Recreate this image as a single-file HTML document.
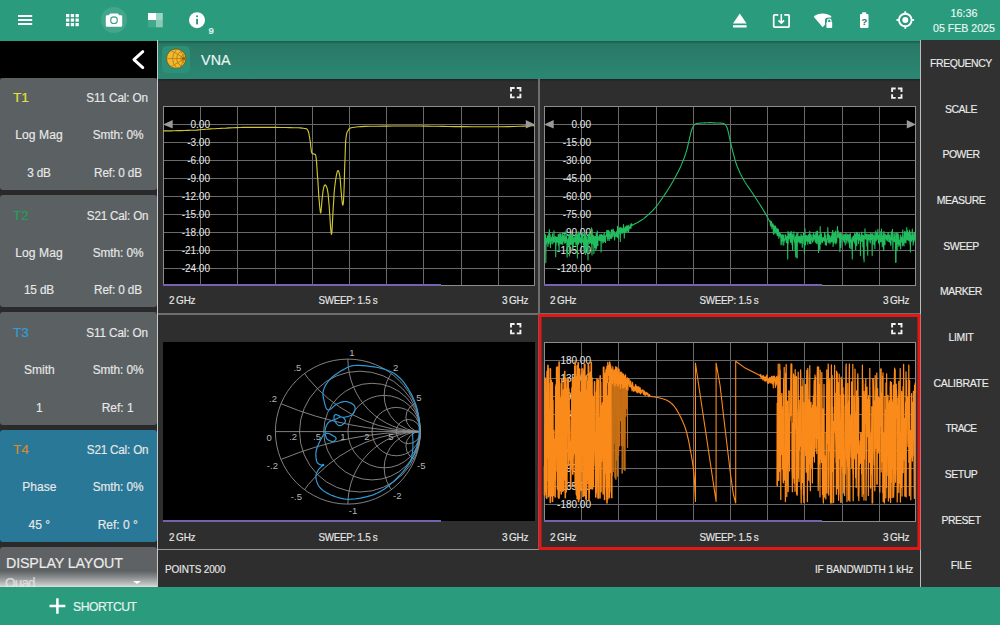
<!DOCTYPE html><html><head><meta charset="utf-8"><style>
html,body{margin:0;padding:0;width:1000px;height:625px;overflow:hidden;background:#2e2e2e;font-family:"Liberation Sans", sans-serif;}
.a{position:absolute;}
.t{position:absolute;white-space:nowrap;font-family:"Liberation Sans", sans-serif;-webkit-text-stroke:0.15px currentColor;}
svg{position:absolute;left:0;top:0;}
</style></head><body>
<div class="a" style="left:0;top:0;width:1000px;height:41px;background:#2b9b7e"></div>
<svg width="1000" height="625"><rect x="18" y="15" width="14.2" height="2" fill="#fff"/><rect x="18" y="19" width="14.2" height="2" fill="#fff"/><rect x="18" y="23" width="14.2" height="2" fill="#fff"/><rect x="66.00" y="14.00" width="3.3" height="3.2" fill="#fff"/><rect x="66.00" y="18.50" width="3.3" height="3.2" fill="#fff"/><rect x="66.00" y="23.00" width="3.3" height="3.2" fill="#fff"/><rect x="70.75" y="14.00" width="3.3" height="3.2" fill="#fff"/><rect x="70.75" y="18.50" width="3.3" height="3.2" fill="#fff"/><rect x="70.75" y="23.00" width="3.3" height="3.2" fill="#fff"/><rect x="75.50" y="14.00" width="3.3" height="3.2" fill="#fff"/><rect x="75.50" y="18.50" width="3.3" height="3.2" fill="#fff"/><rect x="75.50" y="23.00" width="3.3" height="3.2" fill="#fff"/><circle cx="114" cy="20" r="13" fill="#43a68b"/><path d="M108.7 15.2 L110.2 13.4 H117.8 L119.3 15.2 H121 Q122.2 15.2 122.2 16.4 V25.6 Q122.2 26.8 121 26.8 H107 Q105.8 26.8 105.8 25.6 V16.4 Q105.8 15.2 107 15.2 Z" fill="#fff"/><circle cx="114" cy="20.2" r="3.3" fill="none" stroke="#3d9f86" stroke-width="1.2"/><rect x="148" y="13" width="8" height="7" fill="#ffffff"/><rect x="156" y="13" width="6.8" height="7" fill="#9ed4c4"/><rect x="156" y="20" width="6.8" height="7.3" fill="#88cab6"/><rect x="148" y="20" width="8" height="7.3" fill="#42a88d"/><circle cx="197" cy="20.2" r="8" fill="#fff"/><rect x="196.1" y="18.8" width="1.9" height="5.6" fill="#2b9b7e"/><circle cx="197.05" cy="16.2" r="1.05" fill="#2b9b7e"/><path d="M739.8 13.4 L746.6 23.4 H733 Z" fill="#fff"/><rect x="733" y="25.2" width="13.6" height="2.3" fill="#fff"/><path d="M778.3 14.8 H774.6 Q773.7 14.8 773.7 15.7 V26.2 Q773.7 27.1 774.6 27.1 H788.2 Q789.1 27.1 789.1 26.2 V15.7 Q789.1 14.8 788.2 14.8 H784.3" fill="none" stroke="#fff" stroke-width="1.7"/><path d="M781.3 13.9 V23.2 M778.5 20.4 L781.3 23.2 L784.1 20.4" fill="none" stroke="#fff" stroke-width="1.6"/><path d="M813.7 16.8 A13.75 13.75 0 0 1 831.6 16.8 L822.7 27.2 Z" fill="#fff"/><path d="M825 19.8 Q825 17.6 829.2 17.6 Q833.4 17.6 833.4 19.8 V29 H825 Z" fill="#2b9b7e"/><rect x="826.4" y="22" width="5.8" height="5.9" rx="0.7" fill="#fff"/><path d="M827.6 22.3 V20.7 A1.7 1.7 0 0 1 831 20.7 V22.3" fill="none" stroke="#fff" stroke-width="1.2"/><rect x="862.2" y="12.3" width="4" height="2" fill="#fff"/><rect x="860" y="14" width="8.5" height="14" rx="1" fill="#fff"/><text x="864.3" y="25.4" font-family="Liberation Sans" font-weight="bold" font-size="9.5" text-anchor="middle" fill="#1f6e5a">?</text><circle cx="905.3" cy="20" r="6.3" fill="none" stroke="#fff" stroke-width="1.9"/><circle cx="905.3" cy="20" r="3" fill="#fff"/><path d="M905.3 11.2 V13.7 M905.3 26.3 V28.8 M896.5 20 H899 M911.6 20 H914.1" stroke="#fff" stroke-width="1.9"/></svg>
<div class="t" style="left:61.20px;width:300px;text-align:center;top:25px;font-size:9.6px;line-height:11.52px;color:#d6f2ea;font-weight:bold;">9</div>
<div class="t" style="left:814.19px;width:300px;text-align:center;top:7px;font-size:10.8px;line-height:12.96px;color:#e8f8f2;font-weight:normal;letter-spacing:-0.016px;transform:scaleX(0.9976);transform-origin:center;">16:36</div>
<div class="t" style="left:814.00px;width:300px;text-align:center;top:22px;font-size:10.6px;line-height:12.72px;color:#e8f8f2;font-weight:normal;letter-spacing:-0.002px;">05 FEB 2025</div>
<div class="a" style="left:0;top:41px;width:158px;height:37px;background:#000"></div>
<div class="a" style="left:157px;top:40px;width:1px;height:547px;background:#c8c8c8"></div>
<div class="a" style="left:0;top:78px;width:157px;height:509px;background:#2a2a2a"></div>
<div class="a" style="left:158px;top:41px;width:762px;height:38px;background:linear-gradient(#2a7764,#2a8773)"></div>
<div class="a" style="left:158px;top:41px;width:762px;height:3px;background:linear-gradient(#1c5a4b,#2a7764)"></div>
<div class="a" style="left:158px;top:79px;width:762px;height:3px;background:linear-gradient(#222,#2e2e2e)"></div>
<div class="a" style="left:920px;top:40px;width:1px;height:547px;background:#bdbdbd"></div>
<div class="a" style="left:921px;top:40px;width:79px;height:547px;background:#313131"></div>
<div class="a" style="left:0;top:587px;width:1000px;height:38px;background:#2b9b7e"></div>
<div class="a" style="left:0;top:78px;width:157px;height:112px;background:#5b6163;border-radius:3px"></div>
<div class="t" style="left:13px;top:90px;font-size:13.7px;line-height:16.44px;color:#e3e33a;font-weight:normal;letter-spacing:0.008px;">T1</div>
<div class="t" style="right:851.74px;top:91px;font-size:12px;line-height:14.40px;color:#e8e8e8;font-weight:normal;letter-spacing:-0.141px;transform:scaleX(0.9782);transform-origin:right;">S11 Cal: On</div>
<div class="t" style="left:-110.67px;width:300px;text-align:center;top:128px;font-size:12px;line-height:14.40px;color:#e8e8e8;font-weight:normal;letter-spacing:0.058px;transform:scaleX(1.0074);transform-origin:center;">Log Mag</div>
<div class="t" style="left:-32.34px;width:300px;text-align:center;top:128px;font-size:12px;line-height:14.40px;color:#e8e8e8;font-weight:normal;letter-spacing:-0.088px;transform:scaleX(0.9881);transform-origin:center;">Smth: 0%</div>
<div class="t" style="left:-110.78px;width:300px;text-align:center;top:166px;font-size:12px;line-height:14.40px;color:#e8e8e8;font-weight:normal;letter-spacing:-0.166px;transform:scaleX(0.9798);transform-origin:center;">3 dB</div>
<div class="t" style="left:-32.36px;width:300px;text-align:center;top:166px;font-size:12px;line-height:14.40px;color:#e8e8e8;font-weight:normal;letter-spacing:-0.128px;transform:scaleX(0.9795);transform-origin:center;">Ref: 0 dB</div>
<div class="a" style="left:0;top:195px;width:157px;height:112px;background:#5b6163;border-radius:3px"></div>
<div class="t" style="left:13px;top:208px;font-size:13.7px;line-height:16.44px;color:#1fa055;font-weight:normal;letter-spacing:0.008px;">T2</div>
<div class="t" style="right:851.78px;top:209px;font-size:12px;line-height:14.40px;color:#e8e8e8;font-weight:normal;letter-spacing:-0.186px;transform:scaleX(0.9715);transform-origin:right;">S21 Cal: On</div>
<div class="t" style="left:-110.67px;width:300px;text-align:center;top:246px;font-size:12px;line-height:14.40px;color:#e8e8e8;font-weight:normal;letter-spacing:0.058px;transform:scaleX(1.0074);transform-origin:center;">Log Mag</div>
<div class="t" style="left:-32.34px;width:300px;text-align:center;top:246px;font-size:12px;line-height:14.40px;color:#e8e8e8;font-weight:normal;letter-spacing:-0.088px;transform:scaleX(0.9881);transform-origin:center;">Smth: 0%</div>
<div class="t" style="left:-110.77px;width:300px;text-align:center;top:283px;font-size:12px;line-height:14.40px;color:#e8e8e8;font-weight:normal;letter-spacing:-0.146px;transform:scaleX(0.9813);transform-origin:center;">15 dB</div>
<div class="t" style="left:-32.36px;width:300px;text-align:center;top:283px;font-size:12px;line-height:14.40px;color:#e8e8e8;font-weight:normal;letter-spacing:-0.128px;transform:scaleX(0.9795);transform-origin:center;">Ref: 0 dB</div>
<div class="a" style="left:0;top:312px;width:157px;height:113px;background:#5b6163;border-radius:3px"></div>
<div class="t" style="left:13px;top:325px;font-size:13.7px;line-height:16.44px;color:#2f9fdc;font-weight:normal;letter-spacing:0.008px;">T3</div>
<div class="t" style="right:851.74px;top:326px;font-size:12px;line-height:14.40px;color:#e8e8e8;font-weight:normal;letter-spacing:-0.141px;transform:scaleX(0.9782);transform-origin:right;">S11 Cal: On</div>
<div class="t" style="left:-110.70px;width:300px;text-align:center;top:363px;font-size:12px;line-height:14.40px;color:#e8e8e8;font-weight:normal;">Smith</div>
<div class="t" style="left:-32.34px;width:300px;text-align:center;top:363px;font-size:12px;line-height:14.40px;color:#e8e8e8;font-weight:normal;letter-spacing:-0.088px;transform:scaleX(0.9881);transform-origin:center;">Smth: 0%</div>
<div class="t" style="left:-110.70px;width:300px;text-align:center;top:401px;font-size:12px;line-height:14.40px;color:#e8e8e8;font-weight:normal;">1</div>
<div class="t" style="left:-32.30px;width:300px;text-align:center;top:401px;font-size:12px;line-height:14.40px;color:#e8e8e8;font-weight:normal;">Ref: 1</div>
<div class="a" style="left:0;top:430px;width:157px;height:112px;background:#2a7898;border-radius:3px"></div>
<div class="t" style="left:13px;top:442px;font-size:13.7px;line-height:16.44px;color:#dc8a2c;font-weight:normal;letter-spacing:0.008px;">T4</div>
<div class="t" style="right:851.78px;top:443px;font-size:12px;line-height:14.40px;color:#e8e8e8;font-weight:normal;letter-spacing:-0.186px;transform:scaleX(0.9715);transform-origin:right;">S21 Cal: On</div>
<div class="t" style="left:-110.70px;width:300px;text-align:center;top:480px;font-size:12px;line-height:14.40px;color:#e8e8e8;font-weight:normal;">Phase</div>
<div class="t" style="left:-32.34px;width:300px;text-align:center;top:480px;font-size:12px;line-height:14.40px;color:#e8e8e8;font-weight:normal;letter-spacing:-0.088px;transform:scaleX(0.9881);transform-origin:center;">Smth: 0%</div>
<div class="t" style="left:-110.70px;width:300px;text-align:center;top:518px;font-size:12px;line-height:14.40px;color:#e8e8e8;font-weight:normal;">45 °</div>
<div class="t" style="left:-32.30px;width:300px;text-align:center;top:518px;font-size:12px;line-height:14.40px;color:#e8e8e8;font-weight:normal;">Ref: 0 °</div>
<div class="a" style="left:0;top:547px;width:157px;height:40px;background:#5e6264;border-radius:3px 3px 0 0"></div>
<div class="t" style="left:5.6px;top:555px;font-size:14.5px;line-height:17.40px;color:#ececec;font-weight:normal;letter-spacing:-0.151px;transform:scaleX(0.9838);transform-origin:left;">DISPLAY LAYOUT</div>
<div class="t" style="left:5.4px;top:575px;font-size:14.5px;line-height:17.40px;color:#e0e0e0;font-weight:normal;letter-spacing:-0.844px;transform:scaleX(0.9286);transform-origin:left;">Quad</div>
<div class="a" style="left:0;top:547px;width:157px;height:40px;background:linear-gradient(rgba(220,220,220,0) 0px,rgba(220,220,220,0) 24px,rgba(200,200,200,0.45) 31px,rgba(225,225,225,0.8) 38px,rgba(230,240,236,0.9) 40px)"></div>
<div class="a" style="left:0;top:587px;width:157px;height:6px;background:#2b9b7e"></div>
<div class="a" style="left:133px;top:581px;width:0;height:0;border-left:4px solid transparent;border-right:4px solid transparent;border-top:3px solid #fff"></div>
<svg width="1000" height="625" style="pointer-events:none"><polyline points="142.8,51.6 133.9,59.6 142.8,67.6" fill="none" stroke="#fff" stroke-width="2.9" stroke-linecap="round" stroke-linejoin="round"/></svg>
<div class="a" style="left:162px;top:46px;width:28px;height:27px;background:#2c8f77;border-radius:5px"></div>
<svg width="1000" height="625"><defs><clipPath id="vc"><circle cx="176.2" cy="58.6" r="9.4"/></clipPath></defs><circle cx="176.2" cy="58.6" r="9.7" fill="#f2b82e" stroke="#6a5010" stroke-width="0.7"/><g clip-path="url(#vc)" fill="none" stroke="#b07a14" stroke-width="0.8"><circle cx="185" cy="58.6" r="4.2"/><circle cx="185" cy="58.6" r="8.3"/><circle cx="185" cy="58.6" r="12.4"/><line x1="165" y1="58.6" x2="185" y2="58.6"/><line x1="185" y1="58.6" x2="168" y2="48.8"/><line x1="185" y1="58.6" x2="168" y2="68.4"/><line x1="185" y1="58.6" x2="176" y2="43"/><line x1="185" y1="58.6" x2="176" y2="74.2"/></g><circle cx="183.6" cy="58.6" r="1.9" fill="#9a6410"/></svg>
<div class="t" style="left:200.7px;top:52px;font-size:14.2px;line-height:17.04px;color:#e8f8f4;font-weight:normal;letter-spacing:0.107px;transform:scaleX(1.0073);transform-origin:left;">VNA</div>
<div class="a" style="left:538px;top:78px;width:2px;height:237px;background:#6e6e6e"></div>
<div class="a" style="left:158px;top:313px;width:381px;height:2px;background:#6e6e6e"></div>
<div class="a" style="left:538px;top:313px;width:382px;height:2px;background:#6e6e6e"></div>
<div class="a" style="left:538px;top:315px;width:2px;height:235px;background:#6e6e6e"></div>
<div class="a" style="left:158px;top:549px;width:762px;height:1px;background:#9a9a9a"></div>
<svg width="1000" height="625"><rect x="163" y="106" width="372" height="180" fill="#000"/>
<line x1="200.5" y1="106" x2="200.5" y2="286" stroke="#6a6a6a" stroke-width="1"/>
<line x1="237.5" y1="106" x2="237.5" y2="286" stroke="#6a6a6a" stroke-width="1"/>
<line x1="275.5" y1="106" x2="275.5" y2="286" stroke="#6a6a6a" stroke-width="1"/>
<line x1="312.5" y1="106" x2="312.5" y2="286" stroke="#6a6a6a" stroke-width="1"/>
<line x1="349.5" y1="106" x2="349.5" y2="286" stroke="#6a6a6a" stroke-width="1"/>
<line x1="386.5" y1="106" x2="386.5" y2="286" stroke="#6a6a6a" stroke-width="1"/>
<line x1="423.5" y1="106" x2="423.5" y2="286" stroke="#6a6a6a" stroke-width="1"/>
<line x1="461.5" y1="106" x2="461.5" y2="286" stroke="#6a6a6a" stroke-width="1"/>
<line x1="498.5" y1="106" x2="498.5" y2="286" stroke="#6a6a6a" stroke-width="1"/>
<line x1="163" y1="124.5" x2="535" y2="124.5" stroke="#6a6a6a" stroke-width="1"/>
<line x1="163" y1="142.5" x2="535" y2="142.5" stroke="#6a6a6a" stroke-width="1"/>
<line x1="163" y1="160.5" x2="535" y2="160.5" stroke="#6a6a6a" stroke-width="1"/>
<line x1="163" y1="178.5" x2="535" y2="178.5" stroke="#6a6a6a" stroke-width="1"/>
<line x1="163" y1="196.5" x2="535" y2="196.5" stroke="#6a6a6a" stroke-width="1"/>
<line x1="163" y1="214.5" x2="535" y2="214.5" stroke="#6a6a6a" stroke-width="1"/>
<line x1="163" y1="232.5" x2="535" y2="232.5" stroke="#6a6a6a" stroke-width="1"/>
<line x1="163" y1="250.5" x2="535" y2="250.5" stroke="#6a6a6a" stroke-width="1"/>
<line x1="163" y1="268.5" x2="535" y2="268.5" stroke="#6a6a6a" stroke-width="1"/>
<rect x="163.5" y="106.5" width="371" height="179" fill="none" stroke="#8c8c8c" stroke-width="1"/>
<rect x="544" y="106" width="372" height="180" fill="#000"/>
<line x1="581.5" y1="106" x2="581.5" y2="286" stroke="#6a6a6a" stroke-width="1"/>
<line x1="618.5" y1="106" x2="618.5" y2="286" stroke="#6a6a6a" stroke-width="1"/>
<line x1="656.5" y1="106" x2="656.5" y2="286" stroke="#6a6a6a" stroke-width="1"/>
<line x1="693.5" y1="106" x2="693.5" y2="286" stroke="#6a6a6a" stroke-width="1"/>
<line x1="730.5" y1="106" x2="730.5" y2="286" stroke="#6a6a6a" stroke-width="1"/>
<line x1="767.5" y1="106" x2="767.5" y2="286" stroke="#6a6a6a" stroke-width="1"/>
<line x1="804.5" y1="106" x2="804.5" y2="286" stroke="#6a6a6a" stroke-width="1"/>
<line x1="842.5" y1="106" x2="842.5" y2="286" stroke="#6a6a6a" stroke-width="1"/>
<line x1="879.5" y1="106" x2="879.5" y2="286" stroke="#6a6a6a" stroke-width="1"/>
<line x1="544" y1="124.5" x2="916" y2="124.5" stroke="#6a6a6a" stroke-width="1"/>
<line x1="544" y1="142.5" x2="916" y2="142.5" stroke="#6a6a6a" stroke-width="1"/>
<line x1="544" y1="160.5" x2="916" y2="160.5" stroke="#6a6a6a" stroke-width="1"/>
<line x1="544" y1="178.5" x2="916" y2="178.5" stroke="#6a6a6a" stroke-width="1"/>
<line x1="544" y1="196.5" x2="916" y2="196.5" stroke="#6a6a6a" stroke-width="1"/>
<line x1="544" y1="214.5" x2="916" y2="214.5" stroke="#6a6a6a" stroke-width="1"/>
<line x1="544" y1="232.5" x2="916" y2="232.5" stroke="#6a6a6a" stroke-width="1"/>
<line x1="544" y1="250.5" x2="916" y2="250.5" stroke="#6a6a6a" stroke-width="1"/>
<line x1="544" y1="268.5" x2="916" y2="268.5" stroke="#6a6a6a" stroke-width="1"/>
<rect x="544.5" y="106.5" width="371" height="179" fill="none" stroke="#8c8c8c" stroke-width="1"/>
<rect x="163" y="342" width="372" height="179" fill="#000"/>
<rect x="544" y="342" width="372" height="180" fill="#000"/>
<line x1="581.5" y1="342" x2="581.5" y2="522" stroke="#6a6a6a" stroke-width="1"/>
<line x1="618.5" y1="342" x2="618.5" y2="522" stroke="#6a6a6a" stroke-width="1"/>
<line x1="656.5" y1="342" x2="656.5" y2="522" stroke="#6a6a6a" stroke-width="1"/>
<line x1="693.5" y1="342" x2="693.5" y2="522" stroke="#6a6a6a" stroke-width="1"/>
<line x1="730.5" y1="342" x2="730.5" y2="522" stroke="#6a6a6a" stroke-width="1"/>
<line x1="767.5" y1="342" x2="767.5" y2="522" stroke="#6a6a6a" stroke-width="1"/>
<line x1="804.5" y1="342" x2="804.5" y2="522" stroke="#6a6a6a" stroke-width="1"/>
<line x1="842.5" y1="342" x2="842.5" y2="522" stroke="#6a6a6a" stroke-width="1"/>
<line x1="879.5" y1="342" x2="879.5" y2="522" stroke="#6a6a6a" stroke-width="1"/>
<line x1="544" y1="360.5" x2="916" y2="360.5" stroke="#6a6a6a" stroke-width="1"/>
<line x1="544" y1="378.5" x2="916" y2="378.5" stroke="#6a6a6a" stroke-width="1"/>
<line x1="544" y1="396.5" x2="916" y2="396.5" stroke="#6a6a6a" stroke-width="1"/>
<line x1="544" y1="414.5" x2="916" y2="414.5" stroke="#6a6a6a" stroke-width="1"/>
<line x1="544" y1="432.5" x2="916" y2="432.5" stroke="#6a6a6a" stroke-width="1"/>
<line x1="544" y1="450.5" x2="916" y2="450.5" stroke="#6a6a6a" stroke-width="1"/>
<line x1="544" y1="468.5" x2="916" y2="468.5" stroke="#6a6a6a" stroke-width="1"/>
<line x1="544" y1="486.5" x2="916" y2="486.5" stroke="#6a6a6a" stroke-width="1"/>
<line x1="544" y1="504.5" x2="916" y2="504.5" stroke="#6a6a6a" stroke-width="1"/>
<rect x="544.5" y="342.5" width="371" height="179" fill="none" stroke="#8c8c8c" stroke-width="1"/>
<text x="210" y="128.1" text-anchor="end" font-family="Liberation Sans" font-size="10" fill="#e8e8e8">0.00</text>
<text x="210" y="146.1" text-anchor="end" font-family="Liberation Sans" font-size="10" fill="#e8e8e8">-3.00</text>
<text x="210" y="164.1" text-anchor="end" font-family="Liberation Sans" font-size="10" fill="#e8e8e8">-6.00</text>
<text x="210" y="182.1" text-anchor="end" font-family="Liberation Sans" font-size="10" fill="#e8e8e8">-9.00</text>
<text x="210" y="200.1" text-anchor="end" font-family="Liberation Sans" font-size="10" fill="#e8e8e8">-12.00</text>
<text x="210" y="218.1" text-anchor="end" font-family="Liberation Sans" font-size="10" fill="#e8e8e8">-15.00</text>
<text x="210" y="236.1" text-anchor="end" font-family="Liberation Sans" font-size="10" fill="#e8e8e8">-18.00</text>
<text x="210" y="254.1" text-anchor="end" font-family="Liberation Sans" font-size="10" fill="#e8e8e8">-21.00</text>
<text x="210" y="272.1" text-anchor="end" font-family="Liberation Sans" font-size="10" fill="#e8e8e8">-24.00</text>
<text x="591" y="128.1" text-anchor="end" font-family="Liberation Sans" font-size="10" fill="#e8e8e8">0.00</text>
<text x="591" y="146.1" text-anchor="end" font-family="Liberation Sans" font-size="10" fill="#e8e8e8">-15.00</text>
<text x="591" y="164.1" text-anchor="end" font-family="Liberation Sans" font-size="10" fill="#e8e8e8">-30.00</text>
<text x="591" y="182.1" text-anchor="end" font-family="Liberation Sans" font-size="10" fill="#e8e8e8">-45.00</text>
<text x="591" y="200.1" text-anchor="end" font-family="Liberation Sans" font-size="10" fill="#e8e8e8">-60.00</text>
<text x="591" y="218.1" text-anchor="end" font-family="Liberation Sans" font-size="10" fill="#e8e8e8">-75.00</text>
<text x="591" y="236.1" text-anchor="end" font-family="Liberation Sans" font-size="10" fill="#e8e8e8">-90.00</text>
<text x="591" y="254.1" text-anchor="end" font-family="Liberation Sans" font-size="10" fill="#e8e8e8">-105.00</text>
<text x="591" y="272.1" text-anchor="end" font-family="Liberation Sans" font-size="10" fill="#e8e8e8">-120.00</text>
<text x="591" y="364.1" text-anchor="end" font-family="Liberation Sans" font-size="10" fill="#e8e8e8">180.00</text>
<text x="591" y="382.1" text-anchor="end" font-family="Liberation Sans" font-size="10" fill="#e8e8e8">135.00</text>
<text x="591" y="400.1" text-anchor="end" font-family="Liberation Sans" font-size="10" fill="#e8e8e8">90.00</text>
<text x="591" y="418.1" text-anchor="end" font-family="Liberation Sans" font-size="10" fill="#e8e8e8">45.00</text>
<text x="591" y="436.1" text-anchor="end" font-family="Liberation Sans" font-size="10" fill="#e8e8e8">0.00</text>
<text x="591" y="454.1" text-anchor="end" font-family="Liberation Sans" font-size="10" fill="#e8e8e8">-45.00</text>
<text x="591" y="472.1" text-anchor="end" font-family="Liberation Sans" font-size="10" fill="#e8e8e8">-90.00</text>
<text x="591" y="490.1" text-anchor="end" font-family="Liberation Sans" font-size="10" fill="#e8e8e8">-135.00</text>
<text x="591" y="508.1" text-anchor="end" font-family="Liberation Sans" font-size="10" fill="#e8e8e8">-180.00</text>
<polyline points="163.0,130.9 164.2,130.9 165.9,130.9 167.8,130.8 170.0,130.8 172.5,130.8 175.0,130.7 177.8,130.6 181.1,130.6 184.5,130.5 187.9,130.4 191.2,130.3 194.0,130.2 196.4,130.1 198.4,129.9 200.3,129.7 202.1,129.5 204.0,129.4 206.0,129.2 208.1,129.1 210.3,128.9 212.5,128.8 214.8,128.7 217.3,128.5 220.0,128.4 223.0,128.2 226.2,128.1 229.6,127.9 233.1,127.8 236.6,127.6 240.0,127.5 243.2,127.4 246.3,127.4 249.4,127.3 252.6,127.3 256.1,127.3 260.0,127.3 264.6,127.3 269.9,127.3 275.4,127.4 280.9,127.5 285.8,127.5 290.0,127.6 293.3,127.7 296.0,127.7 298.3,127.8 300.2,127.9 301.9,128.1 303.4,128.3 304.7,128.5 305.6,128.6 306.3,128.8 306.9,129.1 307.4,129.6 307.9,130.5 308.4,131.8 308.9,133.5 309.2,135.4 309.6,137.4 309.9,139.5 310.2,141.4 310.5,143.4 310.7,145.5 310.9,147.6 311.2,149.6 311.4,151.3 311.7,152.6 312.1,153.4 312.5,153.8 312.9,153.9 313.4,153.9 313.8,153.9 314.2,154.1 314.5,154.3 314.9,154.3 315.2,154.4 315.4,154.7 315.7,155.5 316.0,157.0 316.3,159.3 316.6,162.4 316.8,165.9 317.1,169.7 317.3,173.5 317.6,177.2 317.9,180.9 318.1,184.8 318.4,188.8 318.6,192.7 318.8,196.4 319.1,199.6 319.4,202.7 319.6,205.7 319.9,208.5 320.2,210.8 320.4,212.4 320.7,213.0 320.9,212.3 321.1,210.6 321.3,208.1 321.6,205.2 321.8,202.4 322.0,200.0 322.2,197.8 322.5,195.6 322.8,193.4 323.0,191.3 323.3,189.5 323.6,188.0 323.9,186.9 324.2,186.0 324.5,185.4 324.8,185.0 325.1,184.9 325.4,185.0 325.8,185.3 326.1,185.9 326.5,186.7 326.9,187.7 327.3,189.1 327.6,190.7 327.9,192.6 328.2,194.7 328.4,197.2 328.6,199.9 328.9,203.0 329.2,206.4 329.5,211.0 329.9,216.9 330.3,223.1 330.7,228.8 331.1,232.8 331.5,234.4 331.8,232.9 332.1,228.9 332.4,223.4 332.7,217.2 333.0,211.3 333.3,206.4 333.6,202.5 333.8,198.9 334.0,195.5 334.2,192.3 334.5,189.2 334.8,186.2 335.2,183.1 335.6,180.0 336.1,177.0 336.6,174.4 337.1,172.3 337.5,171.0 337.9,170.5 338.3,170.8 338.7,171.6 339.1,172.8 339.5,174.4 339.8,176.0 340.1,177.9 340.3,180.3 340.5,182.9 340.7,185.7 340.9,188.4 341.1,191.0 341.4,193.7 341.6,196.7 341.9,199.7 342.2,202.3 342.5,204.2 342.7,205.2 342.9,205.2 343.1,204.5 343.3,203.2 343.5,201.2 343.6,198.5 343.8,195.2 344.0,190.8 344.2,185.3 344.4,179.2 344.5,172.9 344.7,166.8 344.9,161.5 345.1,156.8 345.2,152.3 345.4,148.1 345.5,144.3 345.7,140.9 346.0,138.0 346.3,135.7 346.6,134.0 346.9,132.8 347.3,131.8 347.8,131.0 348.3,130.2 348.8,129.4 349.1,128.9 349.6,128.4 350.2,128.1 351.2,127.8 352.7,127.5 354.5,127.2 356.3,127.0 358.5,126.8 361.3,126.6 365.1,126.4 370.0,126.3 376.6,126.2 384.8,126.1 393.9,126.0 403.2,126.0 412.2,126.0 420.0,126.0 426.5,126.1 432.1,126.2 437.3,126.3 442.6,126.4 448.3,126.5 455.0,126.6 463.1,126.6 472.3,126.7 482.1,126.7 491.7,126.7 500.5,126.7 508.0,126.6 514.2,126.5 519.6,126.3 524.3,126.1 528.3,125.9 531.5,125.7 534.0,125.6" fill="none" stroke="#cfc62e" stroke-width="1.15" stroke-linejoin="round"/>
<polyline points="544.5,235.1 544.7,240.9 544.9,234.7 545.1,239.3 545.3,235.1 545.5,234.8 545.6,245.0 545.8,262.8 546.0,244.6 546.2,238.3 546.4,243.9 546.6,239.9 546.8,239.5 547.0,240.4 547.2,241.9 547.4,235.9 547.5,237.4 547.7,236.1 547.9,246.4 548.1,239.3 548.3,239.9 548.5,242.4 548.7,233.9 548.9,243.6 549.1,239.6 549.3,239.4 549.4,229.6 549.6,241.4 549.8,235.2 550.0,235.0 550.2,234.9 550.4,247.6 550.6,239.5 550.8,241.2 551.0,241.5 551.2,243.6 551.3,239.3 551.5,237.6 551.7,237.3 551.9,240.7 552.1,240.5" fill="none" stroke="#22bd5f" stroke-width="1.1" stroke-linejoin="round"/>
<polyline points="552.1,240.5 552.3,236.6 552.5,233.9 552.7,243.9 552.9,242.0 553.1,239.3 553.2,238.1 553.4,242.2 553.6,237.2 553.8,238.2 554.0,230.8 554.2,242.1 554.4,241.0 554.6,237.8 554.8,240.6 555.0,237.0 555.1,241.7 555.3,238.6 555.5,236.5 555.7,256.7 555.9,239.9 556.1,245.1 556.3,237.0 556.5,237.8 556.7,241.9 556.9,240.6 557.0,237.3 557.2,237.6 557.4,242.3 557.6,239.8 557.8,241.0 558.0,242.6 558.2,234.6 558.4,245.3 558.6,237.8 558.8,241.3 558.9,244.2 559.1,251.4 559.3,233.7 559.5,240.1 559.7,243.5" fill="none" stroke="#22bd5f" stroke-width="1.1" stroke-linejoin="round"/>
<polyline points="559.7,243.5 559.9,241.6 560.1,239.0 560.3,233.9 560.5,236.2 560.7,243.9 560.8,234.0 561.0,242.7 561.2,237.0 561.4,237.0 561.6,244.0 561.8,242.0 562.0,239.0 562.2,236.0 562.4,233.1 562.6,242.0 562.7,244.3 562.9,240.4 563.1,238.2 563.3,235.5 563.5,239.5 563.7,240.0 563.9,240.1 564.1,241.6 564.3,232.4 564.5,242.2 564.6,240.7 564.8,243.1 565.0,242.1 565.2,237.1 565.4,242.3 565.6,242.7 565.8,237.4 566.0,230.9 566.2,236.7 566.4,240.4 566.5,236.5 566.7,236.5 566.9,243.4 567.1,257.3 567.3,245.0" fill="none" stroke="#22bd5f" stroke-width="1.1" stroke-linejoin="round"/>
<polyline points="567.3,245.0 567.5,241.0 567.7,239.7 567.9,238.8 568.1,246.2 568.3,240.5 568.4,244.4 568.6,241.0 568.8,235.8 569.0,234.1 569.2,240.8 569.4,256.0 569.6,239.0 569.8,237.3 570.0,238.1 570.2,235.4 570.3,234.5 570.5,243.5 570.7,244.8 570.9,237.1 571.1,233.9 571.3,233.9 571.5,244.2 571.7,235.1 571.9,238.1 572.1,237.5 572.2,235.9 572.4,235.1 572.6,249.3 572.8,238.3 573.0,236.1 573.2,246.6 573.4,242.9 573.6,241.4 573.8,238.6 574.0,239.6 574.1,240.2 574.3,237.4 574.5,240.8 574.7,241.1 574.9,242.4" fill="none" stroke="#22bd5f" stroke-width="1.1" stroke-linejoin="round"/>
<polyline points="574.9,242.4 575.1,234.9 575.3,240.9 575.5,239.0 575.7,238.0 575.9,245.1 576.0,242.1 576.2,235.7 576.4,243.9 576.6,233.1 576.8,243.8 577.0,238.6 577.2,235.3 577.4,258.1 577.6,235.9 577.8,239.1 577.9,234.0 578.1,239.8 578.3,231.8 578.5,244.2 578.7,237.7 578.9,239.8 579.1,242.8 579.3,237.1 579.5,233.4 579.7,234.0 579.8,241.8 580.0,239.8 580.2,238.0 580.4,242.5 580.6,239.3 580.8,237.7 581.0,240.9 581.2,243.7 581.4,235.7 581.6,241.8 581.7,236.0 581.9,235.7 582.1,234.1 582.3,234.9 582.5,242.4" fill="none" stroke="#22bd5f" stroke-width="1.1" stroke-linejoin="round"/>
<polyline points="582.5,242.4 582.7,232.3 582.9,241.7 583.1,238.3 583.3,241.3 583.5,241.5 583.6,245.1 583.8,243.4 584.0,242.1 584.2,250.9 584.4,236.2 584.6,232.3 584.8,233.4 585.0,239.3 585.2,240.0 585.4,254.5 585.5,234.9 585.7,239.1 585.9,241.5 586.1,246.1 586.3,240.6 586.5,240.2 586.7,239.8 586.9,236.3 587.1,250.9 587.3,241.6 587.4,241.2 587.6,243.1 587.8,240.2 588.0,260.0 588.2,241.3 588.4,234.2 588.6,235.5 588.8,242.3 589.0,240.4 589.2,236.9 589.3,240.7 589.5,233.0 589.7,243.5 589.9,235.7 590.1,234.7" fill="none" stroke="#22bd5f" stroke-width="1.1" stroke-linejoin="round"/>
<polyline points="590.1,234.7 590.3,242.7 590.5,239.0 590.7,239.6 590.9,237.6 591.1,237.7 591.2,236.7 591.4,244.0 591.6,227.7 591.8,249.3 592.0,254.9 592.2,229.5 592.4,239.3 592.6,243.1 592.8,238.3 593.0,240.7 593.1,235.4 593.3,238.2 593.5,244.6 593.7,239.3 593.9,253.6 594.1,236.0 594.3,237.3 594.5,239.9 594.7,247.6 594.9,242.6 595.0,236.7 595.2,237.5 595.4,236.8 595.6,238.4 595.8,250.4 596.0,239.7 596.2,233.6 596.4,244.4 596.6,248.1 596.8,238.9 596.9,235.8 597.1,241.3 597.3,231.1 597.5,238.3 597.7,246.1" fill="none" stroke="#22bd5f" stroke-width="1.1" stroke-linejoin="round"/>
<polyline points="597.7,246.1 597.9,238.6 598.1,236.7 598.3,236.7 598.5,237.7 598.7,239.2 598.8,236.8 599.0,240.3 599.2,240.3 599.4,235.1 599.6,239.2 599.8,236.9 600.0,240.6 600.2,234.5 600.4,237.5 600.6,235.0 600.7,239.2 600.9,236.8 601.1,252.0 601.3,235.3 601.5,234.5 601.7,241.0 601.9,240.0 602.1,239.3 602.3,236.3 602.5,236.0 602.6,235.2 602.8,243.0 603.0,242.7 603.2,242.4 603.4,238.9 603.6,241.4 603.8,234.6 604.0,241.4 604.2,232.5 604.4,236.0 604.5,236.6 604.7,238.6 604.9,241.1 605.1,239.4 605.3,235.6" fill="none" stroke="#22bd5f" stroke-width="1.1" stroke-linejoin="round"/>
<polyline points="605.3,235.6 605.5,242.5 605.7,236.4 605.9,235.9 606.1,236.0 606.3,234.4 606.4,236.3 606.6,233.7 606.8,230.2 607.0,233.6 607.2,231.3 607.4,238.5 607.6,230.5 607.8,240.5 608.0,234.3 608.2,238.3 608.3,234.5 608.5,237.2 608.7,230.3 608.9,234.3 609.1,236.0 609.3,240.4 609.5,231.8 609.7,234.4 609.9,235.7 610.1,234.3 610.2,236.2 610.4,235.7 610.6,238.5 610.8,237.0 611.0,233.6 611.2,233.1 611.4,229.9 611.6,234.0 611.8,238.6 612.0,233.6 612.1,233.6 612.3,230.0 612.5,236.1 612.7,230.5 612.9,236.9" fill="none" stroke="#22bd5f" stroke-width="1.1" stroke-linejoin="round"/>
<polyline points="612.9,236.9 613.1,229.1 613.3,229.7 613.5,233.2 613.7,232.4 613.9,234.4 614.0,232.4 614.2,234.6 614.4,231.6 614.6,240.0 614.8,236.1 615.0,235.6 615.2,235.7 615.4,234.1 615.6,234.1 615.8,233.1 615.9,233.1 616.1,236.7 616.3,233.4 616.5,234.4 616.7,231.3 616.9,235.2 617.1,232.0 617.3,237.3 617.5,226.3 617.7,230.3 617.8,237.5 618.0,233.7 618.2,229.0 618.4,231.2 618.6,238.9 618.8,230.1 619.0,232.6 619.2,227.9 619.4,232.4 619.6,232.9 619.7,228.0 619.9,230.8 620.1,229.8 620.3,241.5 620.5,233.2" fill="none" stroke="#22bd5f" stroke-width="1.1" stroke-linejoin="round"/>
<polyline points="620.5,233.2 620.7,227.4 620.9,230.5 621.1,229.6 621.3,233.3 621.5,229.7 621.6,230.9 621.8,228.1 622.0,230.9 622.2,228.9 622.4,232.2 622.6,233.2 622.8,231.5 623.0,230.6 623.2,227.8 623.4,232.0 623.5,224.5 623.7,230.7 623.9,231.3 624.1,229.5 624.3,238.1 624.5,228.3 624.7,229.8 624.9,231.6 625.1,227.4 625.3,228.5 625.4,228.0 625.6,227.4 625.8,226.5 626.0,232.4 626.2,226.8 626.4,231.3 626.6,230.5 626.8,229.7 627.0,225.4 627.2,230.0 627.3,228.1 627.5,228.9 627.7,231.3 627.9,229.4 628.1,225.9" fill="none" stroke="#22bd5f" stroke-width="1.1" stroke-linejoin="round"/>
<polyline points="628.1,225.9 628.3,225.3 628.5,232.0 628.7,228.9 628.9,230.2 629.1,226.9 629.2,228.6 629.4,227.3 629.6,228.2 629.8,227.9 630.0,227.8 630.2,224.9 630.4,228.3 630.6,225.5 630.8,228.0 631.0,228.3 631.1,225.7 631.3,223.5 631.5,225.5 631.7,225.4 631.9,224.1 632.0,225.5 632.9,225.0 634.1,224.3 635.6,223.5 637.2,222.7 638.7,221.8 640.0,221.0 641.1,220.3 642.1,219.7 643.1,219.1 644.0,218.4 645.1,217.5 646.3,216.5 647.7,215.3 649.2,213.9 650.8,212.4 652.4,210.8 654.1,209.0 655.8,207.0 657.6,204.8" fill="none" stroke="#22bd5f" stroke-width="1.1" stroke-linejoin="round"/>
<polyline points="657.6,204.8 659.4,202.2 661.3,199.6 663.2,196.8 665.0,194.1 666.7,191.6 668.2,189.2 669.7,186.9 671.0,184.7 672.3,182.5 673.6,180.2 674.8,178.0 676.0,175.7 677.2,173.5 678.4,171.2 679.5,168.9 680.6,166.7 681.6,164.4 682.5,162.1 683.4,159.9 684.3,157.6 685.1,155.3 685.8,153.1 686.5,150.8 687.2,148.5 687.8,146.0 688.3,143.6 688.9,141.2 689.4,139.1 689.8,137.2 690.2,135.7 690.5,134.4 690.7,133.3 691.0,132.3 691.2,131.4 691.5,130.5 691.8,129.6 692.1,128.8 692.5,128.0 692.8,127.2 693.1,126.6" fill="none" stroke="#22bd5f" stroke-width="1.1" stroke-linejoin="round"/>
<polyline points="693.1,126.6 693.5,126.0 693.9,125.5 694.2,125.0 694.6,124.7 695.0,124.3 695.5,124.1 696.0,123.8 696.6,123.6 697.2,123.4 697.8,123.3 698.5,123.2 699.3,123.2 700.0,123.1 700.8,123.0 701.6,123.0 702.4,123.0 703.3,123.0 704.2,122.9 705.0,122.9 705.8,122.8 706.7,122.8 707.5,122.7 708.3,122.7 709.2,122.6 710.0,122.6 710.8,122.6 711.7,122.7 712.5,122.8 713.3,122.9 714.2,122.9 715.0,123.0 715.9,123.0 716.7,123.0 717.6,123.0 718.4,123.0 719.3,123.0 720.0,123.0 720.7,123.1 721.3,123.1 721.9,123.2" fill="none" stroke="#22bd5f" stroke-width="1.1" stroke-linejoin="round"/>
<polyline points="721.9,123.2 722.5,123.3 723.0,123.4 723.5,123.6 724.0,123.8 724.4,124.0 724.9,124.3 725.2,124.6 725.6,125.0 726.0,125.5 726.3,126.1 726.7,126.7 727.0,127.5 727.3,128.3 727.6,129.3 727.9,130.4 728.2,131.7 728.5,133.1 728.9,134.7 729.2,136.3 729.6,138.1 730.0,140.0 730.5,142.0 731.0,144.2 731.5,146.5 732.1,148.9 732.7,151.2 733.3,153.5 733.9,155.7 734.5,158.0 735.1,160.2 735.8,162.5 736.6,164.7 737.4,167.0 738.4,169.3 739.4,171.6 740.5,173.9 741.7,176.2 743.0,178.5 744.2,180.7 745.5,182.8" fill="none" stroke="#22bd5f" stroke-width="1.1" stroke-linejoin="round"/>
<polyline points="745.5,182.8 746.7,184.7 748.0,186.6 749.4,188.6 750.9,190.7 752.4,193.0 754.1,195.6 756.0,198.5 757.9,201.5 759.9,204.5 761.7,207.4 763.3,210.0 764.7,212.4 766.1,214.8 767.3,217.1 768.4,219.1 769.3,220.8 770.0,222.0 770.0,220.7 770.2,220.9 770.4,224.1 770.6,225.4 770.8,226.1 771.0,221.9 771.1,222.9 771.3,224.9 771.5,221.5 771.7,223.2 771.9,228.8 772.1,225.4 772.3,223.8 772.5,226.6 772.7,225.8 772.9,224.8 773.0,224.4 773.2,224.1 773.4,234.3 773.6,225.5 773.8,227.3 774.0,228.7 774.2,230.2" fill="none" stroke="#22bd5f" stroke-width="1.1" stroke-linejoin="round"/>
<polyline points="774.2,230.2 774.4,226.1 774.6,231.2 774.8,232.2 774.9,233.7 775.1,225.8 775.3,231.0 775.5,229.4 775.7,226.5 775.9,231.5 776.1,227.9 776.3,233.1 776.5,228.7 776.7,232.9 776.8,229.7 777.0,235.1 777.2,228.9 777.4,230.6 777.6,235.8 777.8,229.1 778.0,233.8 778.2,231.6 778.4,229.6 778.6,231.6 778.7,235.0 778.9,238.5 779.1,233.2 779.3,235.2 779.5,232.5 779.7,236.1 779.9,234.3 780.1,236.2 780.3,233.8 780.5,235.4 780.6,237.3 780.8,233.9 781.0,244.8 781.2,239.3 781.4,235.4 781.6,241.4 781.8,237.1" fill="none" stroke="#22bd5f" stroke-width="1.1" stroke-linejoin="round"/>
<polyline points="781.8,237.1 782.0,244.7 782.2,234.4 782.4,235.5 782.5,241.2 782.7,240.4 782.9,237.9 783.1,238.8 783.3,237.2 783.5,235.0 783.7,245.1 783.9,241.7 784.1,242.2 784.3,240.3 784.4,239.2 784.6,238.8 784.8,240.1 785.0,238.9 785.2,234.6 785.4,235.8 785.6,236.6 785.8,236.6 786.0,235.5 786.2,241.9 786.3,237.6 786.5,242.7 786.7,239.4 786.9,238.5 787.1,236.5 787.3,238.1 787.5,240.9 787.7,259.0 787.9,231.6 788.1,231.8 788.2,243.5 788.4,233.1 788.6,236.2 788.8,238.9 789.0,233.8 789.2,236.2 789.4,234.0" fill="none" stroke="#22bd5f" stroke-width="1.1" stroke-linejoin="round"/>
<polyline points="789.4,234.0 789.6,238.4 789.8,235.9 790.0,232.2 790.1,240.3 790.3,238.4 790.5,242.2 790.7,237.0 790.9,238.0 791.1,231.4 791.3,234.8 791.5,242.2 791.7,238.5 791.9,237.5 792.0,244.4 792.2,233.9 792.4,236.1 792.6,250.3 792.8,240.5 793.0,235.2 793.2,237.6 793.4,238.9 793.6,236.0 793.8,235.5 793.9,231.7 794.1,235.1 794.3,239.8 794.5,242.0 794.7,239.1 794.9,240.4 795.1,250.5 795.3,239.5 795.5,236.7 795.7,256.7 795.8,238.7 796.0,237.7 796.2,235.4 796.4,238.2 796.6,242.0 796.8,232.7 797.0,258.3" fill="none" stroke="#22bd5f" stroke-width="1.1" stroke-linejoin="round"/>
<polyline points="797.0,258.3 797.2,237.3 797.4,237.0 797.6,241.2 797.7,234.4 797.9,232.6 798.1,242.3 798.3,238.7 798.5,241.2 798.7,239.3 798.9,240.1 799.1,236.6 799.3,241.7 799.5,239.6 799.6,236.2 799.8,236.8 800.0,243.4 800.2,237.7 800.4,241.6 800.6,237.6 800.8,241.4 801.0,234.1 801.2,242.7 801.4,241.1 801.5,238.4 801.7,240.4 801.9,235.8 802.1,241.4 802.3,247.3 802.5,237.2 802.7,237.5 802.9,236.1 803.1,237.5 803.3,237.2 803.4,232.7 803.6,236.9 803.8,243.6 804.0,239.7 804.2,236.1 804.4,253.0 804.6,239.0" fill="none" stroke="#22bd5f" stroke-width="1.1" stroke-linejoin="round"/>
<polyline points="804.6,239.0 804.8,241.5 805.0,228.9 805.2,240.2 805.3,236.8 805.5,245.0 805.7,236.0 805.9,241.2 806.1,240.0 806.3,235.6 806.5,240.1 806.7,240.0 806.9,241.1 807.1,236.6 807.2,235.7 807.4,236.2 807.6,239.0 807.8,244.2 808.0,236.2 808.2,241.4 808.4,239.4 808.6,234.5 808.8,235.9 809.0,241.3 809.1,238.5 809.3,237.6 809.5,243.3 809.7,231.3 809.9,232.1 810.1,243.8 810.3,235.8 810.5,234.8 810.7,240.0 810.9,240.6 811.0,243.5 811.2,234.9 811.4,237.9 811.6,239.4 811.8,239.9 812.0,238.0 812.2,238.2" fill="none" stroke="#22bd5f" stroke-width="1.1" stroke-linejoin="round"/>
<polyline points="812.2,238.2 812.4,238.3 812.6,242.2 812.8,234.7 812.9,234.7 813.1,236.3 813.3,240.9 813.5,236.8 813.7,232.6 813.9,239.0 814.1,236.1 814.3,234.8 814.5,236.7 814.7,235.4 814.8,237.4 815.0,239.9 815.2,241.9 815.4,239.5 815.6,238.7 815.8,232.1 816.0,239.9 816.2,242.9 816.4,232.6 816.6,231.6 816.7,237.7 816.9,237.9 817.1,243.7 817.3,238.4 817.5,231.1 817.7,233.0 817.9,240.7 818.1,238.6 818.3,236.2 818.5,252.5 818.6,240.3 818.8,239.9 819.0,237.6 819.2,235.5 819.4,235.3 819.6,243.4 819.8,249.7" fill="none" stroke="#22bd5f" stroke-width="1.1" stroke-linejoin="round"/>
<polyline points="819.8,249.7 820.0,236.7 820.2,226.6 820.4,242.4 820.5,238.7 820.7,235.7 820.9,244.0 821.1,234.1 821.3,241.1 821.5,233.7 821.7,241.5 821.9,239.3 822.1,239.8 822.3,238.0 822.4,242.2 822.6,242.6 822.8,238.6 823.0,237.6 823.2,240.6 823.4,237.9 823.6,239.2 823.8,237.5 824.0,239.4 824.2,240.4 824.3,238.0 824.5,232.4 824.7,241.3 824.9,233.0 825.1,236.4 825.3,244.7 825.5,235.3 825.7,240.9 825.9,241.4 826.1,239.0 826.2,239.0 826.4,245.3 826.6,242.0 826.8,242.4 827.0,238.3 827.2,237.7 827.4,234.4" fill="none" stroke="#22bd5f" stroke-width="1.1" stroke-linejoin="round"/>
<polyline points="827.4,234.4 827.6,239.2 827.8,227.6 828.0,233.4 828.1,241.2 828.3,242.7 828.5,238.7 828.7,234.4 828.9,241.9 829.1,235.8 829.3,235.4 829.5,237.3 829.7,239.4 829.9,239.4 830.0,243.8 830.2,238.8 830.4,239.5 830.6,237.6 830.8,238.2 831.0,236.1 831.2,242.0 831.4,240.3 831.6,235.8 831.8,241.8 831.9,237.7 832.1,233.3 832.3,241.1 832.5,234.1 832.7,230.2 832.9,231.2 833.1,246.5 833.3,234.3 833.5,241.6 833.7,243.4 833.8,233.4 834.0,236.4 834.2,237.3 834.4,232.9 834.6,239.5 834.8,238.6 835.0,242.8" fill="none" stroke="#22bd5f" stroke-width="1.1" stroke-linejoin="round"/>
<polyline points="835.0,242.8 835.2,243.0 835.4,239.0 835.6,231.1 835.7,233.3 835.9,243.9 836.1,237.7 836.3,241.6 836.5,237.8 836.7,242.2 836.9,237.7 837.1,233.0 837.3,231.2 837.5,226.6 837.6,237.2 837.8,237.3 838.0,235.3 838.2,231.0 838.4,236.4 838.6,237.1 838.8,236.9 839.0,235.3 839.2,238.2 839.4,238.6 839.5,233.5 839.7,240.0 839.9,251.6 840.1,242.5 840.3,232.9 840.5,232.6 840.7,242.5 840.9,247.6 841.1,242.7 841.3,242.1 841.4,233.9 841.6,237.4 841.8,238.3 842.0,236.0 842.2,235.9 842.4,238.8 842.6,239.7" fill="none" stroke="#22bd5f" stroke-width="1.1" stroke-linejoin="round"/>
<polyline points="842.6,239.7 842.8,239.2 843.0,239.3 843.2,236.5 843.3,239.9 843.5,237.7 843.7,234.6 843.9,241.1 844.1,242.0 844.3,234.7 844.5,240.2 844.7,234.8 844.9,242.6 845.1,236.4 845.2,245.1 845.4,236.2 845.6,234.4 845.8,237.8 846.0,233.1 846.2,235.4 846.4,239.4 846.6,236.5 846.8,243.3 847.0,236.4 847.1,239.0 847.3,235.1 847.5,239.6 847.7,234.2 847.9,235.6 848.1,240.9 848.3,239.8 848.5,236.4 848.7,235.1 848.9,243.0 849.0,238.7 849.2,234.9 849.4,238.7 849.6,247.7 849.8,236.2 850.0,240.5 850.2,233.4" fill="none" stroke="#22bd5f" stroke-width="1.1" stroke-linejoin="round"/>
<polyline points="850.2,233.4 850.4,241.7 850.6,239.6 850.8,240.2 850.9,248.7 851.1,240.2 851.3,240.8 851.5,240.6 851.7,242.5 851.9,237.9 852.1,244.6 852.3,259.0 852.5,240.8 852.7,238.6 852.8,237.5 853.0,236.3 853.2,237.6 853.4,236.1 853.6,237.9 853.8,241.7 854.0,240.3 854.2,238.1 854.4,241.7 854.6,233.6 854.7,239.4 854.9,243.6 855.1,242.3 855.3,234.4 855.5,237.4 855.7,249.8 855.9,237.2 856.1,237.4 856.3,232.3 856.5,239.7 856.6,238.3 856.8,245.5 857.0,232.5 857.2,237.9 857.4,239.7 857.6,232.8 857.8,238.4" fill="none" stroke="#22bd5f" stroke-width="1.1" stroke-linejoin="round"/>
<polyline points="857.8,238.4 858.0,234.1 858.2,236.2 858.4,236.2 858.5,243.6 858.7,234.3 858.9,239.8 859.1,236.9 859.3,238.3 859.5,233.5 859.7,237.2 859.9,240.8 860.1,240.0 860.3,238.7 860.4,255.6 860.6,238.4 860.8,237.9 861.0,234.8 861.2,241.6 861.4,234.3 861.6,235.0 861.8,232.0 862.0,237.4 862.2,238.0 862.3,240.9 862.5,240.3 862.7,235.2 862.9,246.9 863.1,243.3 863.3,235.3 863.5,244.1 863.7,258.5 863.9,240.1 864.1,261.7 864.2,235.7 864.4,237.7 864.6,237.8 864.8,233.6 865.0,228.7 865.2,238.8 865.4,234.2" fill="none" stroke="#22bd5f" stroke-width="1.1" stroke-linejoin="round"/>
<polyline points="865.4,234.2 865.6,234.3 865.8,239.2 866.0,237.9 866.1,236.6 866.3,235.7 866.5,234.1 866.7,234.7 866.9,246.3 867.1,238.9 867.3,241.6 867.5,243.2 867.7,255.2 867.9,234.1 868.0,241.8 868.2,236.7 868.4,234.7 868.6,237.9 868.8,235.8 869.0,236.8 869.2,239.8 869.4,234.5 869.6,237.6 869.8,235.0 869.9,241.7 870.1,235.4 870.3,242.9 870.5,237.4 870.7,233.3 870.9,239.6 871.1,234.9 871.3,234.6 871.5,234.9 871.7,234.0 871.8,239.1 872.0,240.5 872.2,255.6 872.4,233.9 872.6,236.1 872.8,243.8 873.0,236.1" fill="none" stroke="#22bd5f" stroke-width="1.1" stroke-linejoin="round"/>
<polyline points="873.0,236.1 873.2,238.5 873.4,235.5 873.6,236.6 873.7,236.8 873.9,244.6 874.1,233.2 874.3,243.5 874.5,236.3 874.7,237.6 874.9,248.7 875.1,237.9 875.3,241.0 875.5,235.1 875.6,238.3 875.8,230.7 876.0,237.6 876.2,241.0 876.4,234.1 876.6,232.8 876.8,236.9 877.0,237.9 877.2,239.2 877.4,238.6 877.5,235.4 877.7,236.9 877.9,229.4 878.1,236.5 878.3,240.1 878.5,242.9 878.7,236.1 878.9,241.7 879.1,240.8 879.3,235.3 879.4,244.8 879.6,238.8 879.8,238.4 880.0,235.2 880.2,231.5 880.4,241.9 880.6,240.1" fill="none" stroke="#22bd5f" stroke-width="1.1" stroke-linejoin="round"/>
<polyline points="880.6,240.1 880.8,235.4 881.0,241.4 881.2,234.4 881.3,240.1 881.5,229.0 881.7,234.6 881.9,237.0 882.1,241.1 882.3,246.7 882.5,236.7 882.7,238.7 882.9,237.7 883.1,236.1 883.2,233.4 883.4,241.7 883.6,247.8 883.8,250.6 884.0,231.4 884.2,236.4 884.4,234.0 884.6,238.0 884.8,237.9 885.0,244.7 885.1,237.0 885.3,237.6 885.5,238.5 885.7,234.2 885.9,235.7 886.1,235.5 886.3,238.7 886.5,239.6 886.7,240.2 886.9,236.7 887.0,240.3 887.2,235.3 887.4,237.6 887.6,238.3 887.8,241.0 888.0,235.1 888.2,232.3" fill="none" stroke="#22bd5f" stroke-width="1.1" stroke-linejoin="round"/>
<polyline points="888.2,232.3 888.4,238.2 888.6,235.3 888.8,241.5 888.9,237.8 889.1,241.6 889.3,237.8 889.5,238.7 889.7,234.8 889.9,236.9 890.1,242.7 890.3,238.3 890.5,237.5 890.7,245.3 890.8,241.2 891.0,244.6 891.2,231.7 891.4,239.8 891.6,237.2 891.8,238.7 892.0,239.8 892.2,236.7 892.4,229.3 892.6,240.1 892.7,240.0 892.9,249.6 893.1,241.1 893.3,241.2 893.5,241.1 893.7,238.3 893.9,233.6 894.1,238.2 894.3,239.4 894.5,241.8 894.6,236.0 894.8,235.3 895.0,236.7 895.2,233.3 895.4,239.2 895.6,241.1 895.8,262.7" fill="none" stroke="#22bd5f" stroke-width="1.1" stroke-linejoin="round"/>
<polyline points="895.8,262.7 896.0,237.0 896.2,238.7 896.4,246.9 896.5,235.5 896.7,232.8 896.9,238.0 897.1,250.7 897.3,238.3 897.5,235.2 897.7,241.0 897.9,233.4 898.1,243.9 898.3,234.1 898.4,237.0 898.6,238.9 898.8,246.4 899.0,240.2 899.2,241.7 899.4,240.7 899.6,243.1 899.8,242.8 900.0,245.3 900.2,236.7 900.3,234.9 900.5,241.8 900.7,248.9 900.9,237.4 901.1,242.7 901.3,241.6 901.5,240.3 901.7,240.9 901.9,237.5 902.1,238.8 902.2,235.5 902.4,237.8 902.6,245.8 902.8,229.8 903.0,235.0 903.2,236.3 903.4,244.7" fill="none" stroke="#22bd5f" stroke-width="1.1" stroke-linejoin="round"/>
<polyline points="903.4,244.7 903.6,238.8 903.8,240.4 904.0,246.0 904.1,236.9 904.3,236.4 904.5,231.6 904.7,239.2 904.9,235.2 905.1,242.3 905.3,238.6 905.5,231.9 905.7,232.9 905.9,242.9 906.0,240.1 906.2,240.1 906.4,235.8 906.6,238.5 906.8,227.6 907.0,237.8 907.2,236.8 907.4,239.6 907.6,230.9 907.8,235.3 907.9,234.8 908.1,240.1 908.3,238.3 908.5,234.5 908.7,232.9 908.9,236.8 909.1,240.6 909.3,234.6 909.5,230.1 909.7,240.5 909.8,236.4 910.0,244.0 910.2,236.6 910.4,252.0 910.6,237.4 910.8,232.1 911.0,239.0" fill="none" stroke="#22bd5f" stroke-width="1.1" stroke-linejoin="round"/>
<polyline points="911.0,239.0 911.2,235.7 911.4,236.7 911.6,241.2 911.7,239.1 911.9,235.6 912.1,235.1 912.3,229.0 912.5,239.5 912.7,235.6 912.9,232.4 913.1,245.2 913.3,235.1 913.5,242.4 913.6,237.9 913.8,239.9 914.0,238.7 914.2,236.9 914.4,232.3 914.6,234.6 914.8,233.5 915.0,241.2 915.2,240.5 915.4,239.3" fill="none" stroke="#22bd5f" stroke-width="1.1" stroke-linejoin="round"/>
<polyline points="544.5,466.6 544.6,494.9 544.7,492.0 544.9,427.7 545.0,453.5 545.1,378.0 545.2,396.8 545.3,442.9 545.5,392.6 545.6,491.2 545.7,384.5 545.8,381.6 545.9,379.9 546.1,484.9 546.2,392.4 546.3,485.0 546.4,497.6 546.5,457.6 546.7,494.7 546.8,498.3 546.9,404.1" fill="none" stroke="#fa8a1a" stroke-width="1.6" stroke-linejoin="round"/>
<polyline points="546.9,404.1 547.0,385.4 547.1,371.2 547.3,447.0 547.4,457.6 547.5,405.7 547.6,429.8 547.7,429.9 547.9,370.0 548.0,365.2 548.1,481.1 548.2,473.1 548.3,443.6 548.5,368.6 548.6,496.7 548.7,468.6 548.8,494.8 548.9,412.0 549.1,471.4 549.2,467.5 549.3,483.2" fill="none" stroke="#fa8a1a" stroke-width="1.6" stroke-linejoin="round"/>
<polyline points="549.3,483.2 549.4,495.4 549.5,410.0 549.7,491.5 549.8,492.3 549.9,406.1 550.0,387.0 550.1,383.0 550.3,502.5 550.4,368.8 550.5,437.2 550.6,395.5 550.7,478.5 550.9,421.5 551.0,491.2 551.1,431.6 551.2,380.4 551.3,495.9 551.5,473.1 551.6,423.3 551.7,481.1" fill="none" stroke="#fa8a1a" stroke-width="1.6" stroke-linejoin="round"/>
<polyline points="551.7,481.1 551.8,425.9 551.9,482.2 552.1,425.9 552.2,464.9 552.3,403.0 552.4,382.7 552.5,501.4 552.7,450.4 552.8,409.7 552.9,400.4 553.0,484.3 553.1,472.8 553.3,459.9 553.4,469.1 553.5,461.3 553.6,430.5 553.7,459.4 553.9,495.3 554.0,443.9 554.1,439.1" fill="none" stroke="#fa8a1a" stroke-width="1.6" stroke-linejoin="round"/>
<polyline points="554.1,439.1 554.2,456.7 554.3,477.2 554.5,474.5 554.6,452.8 554.7,478.8 554.8,480.8 554.9,459.1 555.1,496.9 555.2,436.6 555.3,480.0 555.4,429.3 555.5,463.5 555.7,386.2 555.8,443.9 555.9,421.3 556.0,471.2 556.1,463.6 556.3,384.6 556.4,453.7 556.5,458.7" fill="none" stroke="#fa8a1a" stroke-width="1.6" stroke-linejoin="round"/>
<polyline points="556.5,458.7 556.6,367.9 556.7,393.9 556.9,380.8 557.0,387.6 557.1,367.0 557.2,415.6 557.3,445.2 557.5,489.3 557.6,419.2 557.7,419.8 557.8,479.2 557.9,367.1 558.1,375.4 558.2,409.9 558.3,497.1 558.4,421.1 558.5,452.6 558.7,382.0 558.8,441.5 558.9,498.5" fill="none" stroke="#fa8a1a" stroke-width="1.6" stroke-linejoin="round"/>
<polyline points="558.9,498.5 559.0,411.5 559.1,362.1 559.3,441.8 559.4,381.8 559.5,487.7 559.6,422.9 559.7,403.1 559.9,415.5 560.0,490.8 560.1,398.6 560.2,432.0 560.3,407.0 560.5,431.3 560.6,429.2 560.7,449.7 560.8,403.3 560.9,478.6 561.1,437.1 561.2,493.9 561.3,396.6" fill="none" stroke="#fa8a1a" stroke-width="1.6" stroke-linejoin="round"/>
<polyline points="561.3,396.6 561.4,383.8 561.5,403.3 561.7,428.9 561.8,447.1 561.9,378.7 562.0,404.4 562.1,409.4 562.3,436.7 562.4,412.9 562.5,445.3 562.6,397.6 562.7,491.2 562.9,438.9 563.0,471.8 563.1,443.2 563.2,451.1 563.3,490.6 563.5,417.3 563.6,389.7 563.7,479.0" fill="none" stroke="#fa8a1a" stroke-width="1.6" stroke-linejoin="round"/>
<polyline points="563.7,479.0 563.8,479.9 563.9,423.0 564.1,472.1 564.2,382.1 564.3,439.4 564.4,408.6 564.5,444.6 564.7,371.6 564.8,477.6 564.9,455.6 565.0,463.0 565.3,497.8 565.6,378.2 565.9,399.6 566.2,492.0 566.5,389.0 566.8,487.7 567.1,448.9 567.4,392.3 567.7,377.5" fill="none" stroke="#fa8a1a" stroke-width="1.6" stroke-linejoin="round"/>
<polyline points="567.7,377.5 568.0,419.8 568.3,379.3 568.6,465.5 568.9,388.9 569.2,411.6 569.5,433.7 569.8,419.1 570.1,459.9 570.4,451.5 570.7,486.7 571.0,450.2 571.3,441.5 571.6,466.6 571.9,388.9 572.0,414.3 572.1,387.3 572.2,454.4 572.4,456.2 572.5,379.6 572.6,395.6" fill="none" stroke="#fa8a1a" stroke-width="1.6" stroke-linejoin="round"/>
<polyline points="572.6,395.6 572.7,429.7 572.8,474.3 573.0,464.2 573.1,383.3 573.2,458.0 573.3,378.4 573.4,455.8 573.6,381.7 573.7,412.0 573.8,409.0 573.9,411.2 574.0,381.2 574.2,453.4 574.3,423.1 574.4,435.0 574.5,442.8 574.6,417.8 574.8,366.7 574.9,367.6 575.0,429.8" fill="none" stroke="#fa8a1a" stroke-width="1.6" stroke-linejoin="round"/>
<polyline points="575.0,429.8 575.1,362.1 575.2,487.5 575.4,422.4 575.5,376.1 575.6,384.4 575.7,416.4 575.8,383.4 576.0,401.1 576.1,402.5 576.2,430.0 576.3,492.4 576.4,494.2 576.6,457.0 576.7,495.3 576.8,456.3 576.9,457.1 577.0,385.0 577.2,365.5 577.3,373.0 577.4,499.3" fill="none" stroke="#fa8a1a" stroke-width="1.6" stroke-linejoin="round"/>
<polyline points="577.4,499.3 577.5,406.0 577.6,401.9 577.8,463.2 577.9,395.9 578.0,494.6 578.1,422.7 578.2,362.9 578.4,471.9 578.5,368.3 578.6,501.5 578.7,411.4 578.8,372.0 579.0,431.3 579.1,369.6 579.2,369.1 579.3,370.5 579.4,419.5 579.6,369.2 579.7,499.0 579.8,433.7" fill="none" stroke="#fa8a1a" stroke-width="1.6" stroke-linejoin="round"/>
<polyline points="579.8,433.7 579.9,436.9 580.0,406.3 580.2,438.4 580.3,446.4 580.4,392.2 580.5,438.1 580.6,442.6 580.8,450.1 580.9,490.7 581.0,425.3 581.1,393.6 581.2,406.0 581.4,470.9 581.5,406.1 581.6,373.6 581.7,373.9 581.8,443.4 582.0,370.7 582.1,368.8 582.2,402.3" fill="none" stroke="#fa8a1a" stroke-width="1.6" stroke-linejoin="round"/>
<polyline points="582.2,402.3 582.3,375.9 582.4,406.3 582.6,440.4 582.7,454.2 582.8,443.0 582.9,477.2 583.0,496.6 583.2,460.9 583.3,476.5 583.4,380.4 583.5,385.9 583.6,457.3 583.8,371.0 583.9,440.6 584.0,369.1 584.1,412.4 584.2,495.8 584.4,394.6 584.5,413.1 584.6,363.8" fill="none" stroke="#fa8a1a" stroke-width="1.6" stroke-linejoin="round"/>
<polyline points="584.6,363.8 584.7,478.6 584.8,375.4 585.0,386.1 585.1,424.9 585.2,474.1 585.3,406.7 585.4,427.0 585.6,424.2 585.7,494.0 585.8,498.7 585.9,376.6 586.0,421.1 586.2,499.9 586.3,443.4 586.4,486.3 586.5,392.4 586.6,390.4 586.8,412.3 586.9,396.1 587.0,397.0" fill="none" stroke="#fa8a1a" stroke-width="1.6" stroke-linejoin="round"/>
<polyline points="587.0,397.0 587.1,480.5 587.2,449.2 587.4,382.2 587.5,431.1 587.6,385.9 587.7,463.2 587.8,390.1 588.0,407.7 588.1,483.7 588.2,474.9 588.3,363.4 588.4,444.7 588.6,416.9 588.7,365.8 588.8,416.0 588.9,461.2 589.0,500.5 589.2,492.3 589.3,456.5 589.4,474.6" fill="none" stroke="#fa8a1a" stroke-width="1.6" stroke-linejoin="round"/>
<polyline points="589.4,474.6 589.5,445.7 589.6,435.6 589.8,373.0 589.9,412.2 590.0,469.1 590.1,405.3 590.2,400.7 590.4,372.2 590.5,456.5 590.6,488.5 590.7,480.2 590.8,448.1 591.0,434.9 591.1,395.7 591.2,438.7 591.3,362.4 591.4,387.1 591.6,488.8 591.7,448.5 591.8,377.4" fill="none" stroke="#fa8a1a" stroke-width="1.6" stroke-linejoin="round"/>
<polyline points="591.8,377.4 591.9,440.0 592.0,417.2 592.2,395.1 592.4,402.7 592.6,488.9 592.8,452.7 593.0,396.8 593.2,443.5 593.4,486.4 593.6,423.1 593.8,438.4 594.0,407.4 594.2,448.9 594.4,391.7 594.6,381.8 594.8,448.7 595.0,392.1 595.2,454.6 595.4,465.9 595.6,432.4" fill="none" stroke="#fa8a1a" stroke-width="1.6" stroke-linejoin="round"/>
<polyline points="595.6,432.4 595.8,497.1 596.0,482.5 596.2,493.0 596.4,461.5 596.6,431.3 596.8,392.5 597.0,378.7 597.2,450.4 597.4,469.9 597.6,477.8 597.8,463.7 598.0,497.1 598.2,498.2 598.4,380.1 598.6,394.3 598.8,428.8 599.0,467.8 599.2,421.2 599.4,417.4 599.6,447.8" fill="none" stroke="#fa8a1a" stroke-width="1.6" stroke-linejoin="round"/>
<polyline points="599.6,447.8 599.8,459.7 600.0,497.9 600.2,375.9 600.4,464.8 600.6,382.0 600.8,414.5 601.0,491.8 601.2,405.8 601.4,461.5 601.6,444.9 601.8,412.2 602.0,437.1 602.2,423.6 602.4,457.3 602.6,403.1 602.8,431.4 603.0,440.2 603.2,493.9 603.4,414.7 603.6,366.7" fill="none" stroke="#fa8a1a" stroke-width="1.6" stroke-linejoin="round"/>
<polyline points="603.6,366.7 603.8,415.5 604.0,400.4 604.2,418.4 604.4,373.3 604.6,499.5 604.8,430.6 605.0,404.2 605.2,460.1 605.4,373.3 605.6,472.6 605.8,447.3 606.0,454.4 606.2,370.9 606.4,471.4 606.6,485.8 606.8,491.4 607.0,502.9 607.2,488.2 607.4,473.0 607.6,499.2" fill="none" stroke="#fa8a1a" stroke-width="1.6" stroke-linejoin="round"/>
<polyline points="607.6,499.2 607.8,395.7 608.0,403.1 608.2,405.3 608.4,382.9 608.6,428.7 608.8,418.2 609.0,487.3 609.2,368.5 609.4,497.6 609.6,384.7 609.8,492.1 610.0,370.3 610.2,424.8 610.4,469.3 610.6,472.2 610.8,437.0 611.0,462.2 611.2,381.2 611.4,417.4 611.6,431.4" fill="none" stroke="#fa8a1a" stroke-width="1.6" stroke-linejoin="round"/>
<polyline points="611.6,431.4 611.8,498.3" fill="none" stroke="#fa8a1a" stroke-width="1.6" stroke-linejoin="round"/>
<polyline points="612.0,365.9 612.3,475.8 612.9,366.7 613.2,472.1 613.8,371.0 614.1,443.9 614.7,369.5 615.0,477.7 615.6,366.3 615.9,479.6 616.5,370.2 616.8,460.5 617.4,372.3 617.7,476.5 618.3,368.4 618.6,455.8 619.2,368.8 619.5,446.3 620.1,371.8 620.4,421.1 621.0,372.0" fill="none" stroke="#c87016" stroke-width="1.0" stroke-linejoin="round"/>
<polyline points="621.0,372.0 621.3,445.9 621.9,375.4 622.2,473.5 622.8,373.7 623.1,446.4 623.7,377.0 624.0,469.8 624.6,379.5 624.9,470.7 625.5,374.9 625.8,416.7 626.4,380.5 626.7,408.9 627.3,377.2 627.6,448.1" fill="none" stroke="#c87016" stroke-width="1.0" stroke-linejoin="round"/>
<polyline points="606.0,372.9 606.3,368.8 606.6,385.0 606.9,366.5 607.2,374.2 607.5,382.4 607.8,362.5 608.1,368.9 608.4,373.1 608.7,375.3 609.0,365.5 609.3,372.5 609.6,361.9 609.9,362.9 610.2,370.0 610.5,364.9 610.8,387.0 611.1,368.6 611.4,369.1 611.7,382.4 612.0,381.4 612.3,369.4 612.6,383.9 612.9,378.9 613.2,373.2 613.5,379.2 613.8,370.1 614.1,370.8 614.4,385.5 614.7,375.3 615.0,386.1 615.3,369.7 615.6,369.0 615.9,367.3 616.2,382.9 616.5,379.1 616.8,367.2 617.1,368.2 617.4,385.1 617.7,378.3 618.0,386.3" fill="none" stroke="#fa8a1a" stroke-width="1.3" stroke-linejoin="round"/>
<polyline points="618.0,386.3 618.3,369.2 618.6,380.7 618.9,371.3 619.2,383.6 619.5,381.6 619.8,381.7 620.1,374.3 620.4,388.4 620.7,372.7 621.0,372.0 621.3,383.7 621.6,373.1 621.9,372.9 622.2,380.1 622.5,383.6 622.8,388.0 623.1,385.1 623.4,374.2 623.7,384.1 624.0,387.5 624.3,375.8 624.6,386.2 624.9,378.5 625.2,379.3 625.5,374.9 625.8,386.7 626.1,383.2 626.4,389.1 626.7,382.8 627.0,378.5 627.3,379.6 627.6,380.5 627.9,390.1 628.2,380.1 628.5,378.7 628.8,382.5 629.1,379.1 629.4,383.8 629.7,386.5 630.0,387.0" fill="none" stroke="#fa8a1a" stroke-width="1.3" stroke-linejoin="round"/>
<polyline points="630.0,387.0 630.3,381.3 630.6,381.1 630.9,385.5 631.2,387.9 631.5,385.3 631.8,386.9 632.1,390.8 632.4,382.5 632.7,384.1 633.0,386.7 633.3,387.3 633.6,391.1 633.9,387.8 634.2,389.0 634.5,386.8 634.8,390.4 635.1,391.0 635.4,386.2 635.7,384.7 636.0,386.3 636.3,387.3 636.6,392.0 636.9,386.9 637.2,390.1 637.5,390.3 637.8,392.9 638.1,386.6 638.4,391.7 638.7,388.7 639.0,387.2 639.3,391.1 639.6,392.6 639.9,391.0 640.2,387.8 640.5,393.8 640.8,390.3 641.1,392.0 641.4,392.6 641.7,390.1 642.0,391.1" fill="none" stroke="#fa8a1a" stroke-width="1.3" stroke-linejoin="round"/>
<polyline points="642.0,391.1 642.3,390.9 642.6,389.9 642.9,389.9 643.2,393.3 643.5,392.0 643.8,394.3 644.1,390.8 644.4,392.1 644.7,391.8 645.0,395.1 645.3,394.6 645.6,395.1 645.9,393.8 646.2,392.5 646.5,393.8 646.8,393.3 647.1,392.9 647.4,394.8 647.7,394.1 648.0,393.8 648.3,395.1 648.6,396.4 648.9,396.6 649.2,395.5 649.5,394.7 649.8,396.5" fill="none" stroke="#fa8a1a" stroke-width="1.3" stroke-linejoin="round"/>
<polyline points="650.0,396.2 651.1,396.4 652.7,396.7 654.5,397.0 656.5,397.3 658.6,397.7 660.7,398.2 662.6,398.7 664.2,399.2 665.6,399.7 666.8,400.3 668.0,400.9 669.1,401.5 670.1,402.3 671.1,403.1 672.1,404.0 673.1,405.0 674.1,406.2 675.1,407.5 676.1,408.9 677.0,410.4 677.9,412.0 678.8,413.6 679.7,415.2 680.5,416.9 681.3,418.6 682.1,420.3 682.9,422.0 683.6,423.8 684.4,425.6 685.1,427.5 685.7,429.5 686.4,431.7 687.0,434.0 687.6,436.5 688.2,439.0 688.8,441.7 689.3,444.4 689.8,447.1 690.3,449.8 690.8,452.4 691.3,454.9 691.7,457.4 692.1,459.8 692.5,462.2 692.8,464.7 693.2,467.3 693.5,470.0 693.8,473.0 694.1,476.4 694.4,480.2 694.6,484.4 694.8,488.5 695.0,492.6 695.2,496.2 695.4,499.2 695.5,501.5 695.4,363.0 716.1,501.5 716.1,363.0 720.0,385.0 724.4,423.0 730.4,473.3 733.3,494.0 735.7,503.0 735.7,361.3 745.2,368.1 760.0,375.6 766.0,380.0" fill="none" stroke="#fa8a1a" stroke-width="1.1" stroke-linejoin="round"/>
<polyline points="760.0,374.5 760.4,376.3 760.7,374.4 761.1,378.7 761.4,376.8 761.8,376.4 762.1,375.6 762.5,377.3 762.8,379.9 763.2,376.8 763.5,375.5 763.9,377.6 764.2,380.6 764.6,377.0 764.9,379.0 765.3,381.3 765.6,376.9 766.0,380.9 766.3,378.8 766.7,375.5 767.0,374.8 767.4,383.0 767.7,378.8 768.1,378.7 768.4,383.5 768.8,380.2 769.1,379.6 769.5,377.5 769.8,382.6 770.2,377.4 770.5,379.9 770.9,383.3 771.2,381.7 771.6,376.2 771.9,377.1 772.3,383.4 772.6,384.0 773.0,376.0 773.3,387.9 773.7,376.5 774.0,377.0 774.4,376.0 774.7,381.1 775.1,383.8 775.4,387.4 775.8,377.2 776.1,385.5 776.5,376.5 776.8,384.0 777.2,378.9 777.5,380.7 777.9,375.8 778.2,387.0 778.6,377.0 778.9,388.1 779.3,380.8 779.6,385.5 780.0,386.5" fill="none" stroke="#fa8a1a" stroke-width="1.1" stroke-linejoin="round"/>
<polyline points="777.0,485.4 777.2,403.2 777.4,485.9 777.6,475.0 777.8,381.8 778.0,469.2 778.2,364.1 778.4,407.4 778.6,455.9 778.8,480.4 779.0,411.2 779.2,434.2 779.4,449.4 779.6,386.1 779.8,364.2 780.0,471.2 780.2,370.0 780.4,430.5 780.6,436.5 780.8,499.4 781.0,397.1" fill="none" stroke="#fa8a1a" stroke-width="1.25" stroke-linejoin="round"/>
<polyline points="781.0,397.1 781.2,454.5 781.4,453.6 781.6,402.1 781.8,393.3 782.0,434.0 782.2,406.6 782.4,415.8 782.6,469.3 782.8,459.4 783.0,446.2 783.2,480.8 783.4,482.8 783.6,378.8 783.8,424.9 784.0,430.3 784.2,367.4 784.4,470.7 784.6,480.0 784.8,463.5 785.0,449.8" fill="none" stroke="#fa8a1a" stroke-width="1.25" stroke-linejoin="round"/>
<polyline points="785.0,449.8 785.2,450.5 785.4,501.5 785.6,373.2 785.8,377.9 786.0,376.4 786.2,364.5 786.4,405.7 786.6,418.0 786.8,496.5 787.0,459.8 787.2,420.0 787.4,420.8 787.6,401.1 787.8,483.6 788.0,470.0 788.2,491.5 788.4,421.8 788.6,455.5 788.8,463.2 789.0,390.5" fill="none" stroke="#fa8a1a" stroke-width="1.25" stroke-linejoin="round"/>
<polyline points="789.0,390.5 789.2,398.8 789.4,470.9 789.6,438.2 789.8,414.8 790.0,420.5 790.2,414.4 790.4,414.0 790.6,415.4 790.8,378.6 791.0,364.0 791.2,409.3 791.4,375.1 791.6,364.9 791.8,364.0 792.0,469.2 792.2,475.7 792.4,491.7 792.6,438.6 792.8,423.3 793.0,478.4" fill="none" stroke="#fa8a1a" stroke-width="1.25" stroke-linejoin="round"/>
<polyline points="793.0,478.4 793.2,405.0 793.4,373.9 793.6,394.5 793.8,446.6 794.0,445.1 794.2,483.1 794.4,407.0 794.6,381.2 794.8,375.5 795.0,491.3 795.2,369.7 795.4,429.3 795.6,385.0 795.8,426.5 796.0,414.3 796.2,397.9 796.4,376.6 796.6,493.4 796.8,377.3 797.0,495.4" fill="none" stroke="#fa8a1a" stroke-width="1.25" stroke-linejoin="round"/>
<polyline points="797.0,495.4 797.2,490.9 797.4,428.2 797.6,435.0 797.8,409.6 798.0,426.9 798.2,372.1 798.4,403.7 798.6,478.3 798.8,412.2 799.0,481.6 799.2,426.8 799.4,449.5 799.6,423.3 799.8,400.4 800.0,414.8 800.2,446.1 800.4,426.0 800.6,369.8 800.8,379.0 801.0,489.8" fill="none" stroke="#fa8a1a" stroke-width="1.25" stroke-linejoin="round"/>
<polyline points="801.0,489.8 801.2,503.0 801.4,455.3 801.6,463.5 801.8,386.5 802.0,460.4 802.2,482.6 802.4,450.1 802.6,388.7 802.8,408.4 803.0,379.5 803.2,415.5 803.4,495.1 803.6,418.2 803.8,502.6 804.0,502.3 804.2,402.6 804.4,421.2 804.6,419.9 804.8,450.1 805.0,449.3" fill="none" stroke="#fa8a1a" stroke-width="1.25" stroke-linejoin="round"/>
<polyline points="805.0,449.3 805.2,403.8 805.4,384.5 805.6,455.6 805.8,433.4 806.0,434.0 806.2,472.2 806.4,411.1 806.6,386.6 806.8,370.3 807.0,402.0 807.2,370.3 807.4,501.5 807.6,394.7 807.8,368.5 808.0,380.9 808.2,398.4 808.4,430.7 808.6,450.4 808.8,480.2 809.0,399.4" fill="none" stroke="#fa8a1a" stroke-width="1.25" stroke-linejoin="round"/>
<polyline points="809.0,399.4 809.2,401.5 809.4,400.9 809.6,464.1 809.8,365.5 810.0,482.1 810.2,465.4 810.4,490.7 810.6,417.3 810.8,403.3 811.0,402.4 811.2,415.7 811.4,415.9 811.6,431.7 811.8,467.5 812.0,408.8 812.2,408.1 812.4,482.9 812.6,405.0 812.8,416.5 813.0,409.1" fill="none" stroke="#fa8a1a" stroke-width="1.25" stroke-linejoin="round"/>
<polyline points="813.0,409.1 813.2,404.7 813.4,395.8 813.6,456.3 813.8,403.2 814.0,392.7 814.2,380.5 814.4,462.0 814.6,431.7 814.8,451.5 815.0,375.0 815.2,428.7 815.4,377.2 815.6,412.2 815.8,436.6 816.0,406.0 816.2,448.2 816.4,407.4 816.6,429.4 816.8,453.6 817.0,439.1" fill="none" stroke="#fa8a1a" stroke-width="1.25" stroke-linejoin="round"/>
<polyline points="817.0,439.1 817.2,378.2 817.4,366.9 817.6,405.0 817.8,410.1 818.0,386.4 818.2,490.5 818.4,479.4 818.6,366.9 818.8,403.1 819.0,425.5 819.2,430.7 819.4,384.8 819.6,464.2 819.8,438.7 820.0,496.9 820.2,370.2 820.4,456.1 820.6,459.1 820.8,449.7 821.0,457.1" fill="none" stroke="#fa8a1a" stroke-width="1.25" stroke-linejoin="round"/>
<polyline points="821.0,457.1 821.2,462.4 821.4,461.9 821.6,449.4 821.8,372.5 822.0,395.5 822.2,436.8 822.4,470.4 822.6,494.6 822.8,442.7 823.0,409.0 823.2,496.9 823.4,503.0 823.6,454.6 823.8,473.8 824.0,384.4 824.2,449.5 824.4,497.2 824.6,479.2 824.8,455.4 825.0,469.1" fill="none" stroke="#fa8a1a" stroke-width="1.25" stroke-linejoin="round"/>
<polyline points="825.0,469.1 825.2,471.0 825.4,456.8 825.6,484.3 825.8,498.9 826.0,432.6 826.2,442.1 826.4,453.9 826.6,408.3 826.8,369.9 827.0,493.1 827.2,405.5 827.4,397.6 827.6,443.0 827.8,430.3 828.0,400.0 828.2,364.0 828.4,370.2 828.6,494.9 828.8,398.7 829.0,451.4" fill="none" stroke="#fa8a1a" stroke-width="1.25" stroke-linejoin="round"/>
<polyline points="829.0,451.4 829.2,380.3 829.4,401.4 829.6,409.8 829.8,378.6 830.0,470.5 830.2,485.4 830.4,495.5 830.6,503.0 830.8,495.3 831.0,501.4 831.2,466.5 831.4,364.9 831.6,428.7 831.8,490.2 832.0,503.0 832.2,375.5 832.4,436.4 832.6,407.2 832.8,430.1 833.0,472.1" fill="none" stroke="#fa8a1a" stroke-width="1.25" stroke-linejoin="round"/>
<polyline points="833.0,472.1 833.2,422.8 833.4,421.6 833.6,502.6 833.8,436.8 834.0,457.4 834.2,415.0 834.4,421.0 834.6,365.4 834.8,410.9 835.0,407.6 835.2,393.1 835.4,431.1 835.6,432.2 835.8,444.4 836.0,463.1 836.2,453.1 836.4,494.2 836.6,371.0 836.8,480.3 837.0,393.0" fill="none" stroke="#fa8a1a" stroke-width="1.25" stroke-linejoin="round"/>
<polyline points="837.0,393.0 837.2,372.8 837.4,389.2 837.6,488.5 837.8,432.4 838.0,382.6 838.2,484.3 838.4,487.2 838.6,500.3 838.8,492.5 839.0,493.9 839.2,374.2 839.4,455.1 839.6,458.6 839.8,452.3 840.0,395.3 840.2,415.8 840.4,421.3 840.6,446.9 840.8,493.6 841.0,502.7" fill="none" stroke="#fa8a1a" stroke-width="1.25" stroke-linejoin="round"/>
<polyline points="841.0,502.7 841.2,377.2 841.4,466.8 841.6,449.5 841.8,464.4 842.0,391.0 842.2,379.7 842.4,407.7 842.6,421.3 842.8,472.6 843.0,387.7 843.2,493.1 843.4,484.4 843.6,394.7 843.8,413.9 844.0,406.0 844.2,433.9 844.4,458.6 844.6,495.6 844.8,474.0 845.0,450.4" fill="none" stroke="#fa8a1a" stroke-width="1.25" stroke-linejoin="round"/>
<polyline points="845.0,450.4 845.2,473.8 845.4,390.9 845.6,385.8 845.8,381.7 846.0,367.6 846.2,364.0 846.4,413.7 846.6,457.9 846.8,461.4 847.0,501.5 847.2,444.7 847.4,404.0 847.6,448.8 847.8,383.3 848.0,403.9 848.2,466.4 848.4,400.9 848.6,500.0 848.8,429.5 849.0,455.1" fill="none" stroke="#fa8a1a" stroke-width="1.25" stroke-linejoin="round"/>
<polyline points="849.0,455.1 849.2,374.5 849.4,364.0 849.6,450.3 849.8,501.2 850.0,422.6 850.2,415.7 850.4,444.0 850.6,436.0 850.8,437.2 851.0,440.1 851.2,444.1 851.4,457.3 851.6,381.9 851.8,468.0 852.0,417.8 852.2,432.0 852.4,394.0 852.6,460.8 852.8,364.3 853.0,473.9" fill="none" stroke="#fa8a1a" stroke-width="1.25" stroke-linejoin="round"/>
<polyline points="853.0,473.9 853.2,500.8 853.4,465.6 853.6,444.7 853.8,396.0 854.0,448.4 854.2,448.0 854.4,454.5 854.6,420.7 854.8,458.8 855.0,369.2 855.2,413.9 855.4,455.2 855.6,477.5 855.8,412.8 856.0,458.4 856.2,487.6 856.4,464.5 856.6,390.8 856.8,438.1 857.0,409.6" fill="none" stroke="#fa8a1a" stroke-width="1.25" stroke-linejoin="round"/>
<polyline points="857.0,409.6 857.2,453.2 857.4,411.1 857.6,381.3 857.8,373.8 858.0,384.3 858.2,496.0 858.4,468.9 858.6,397.7 858.8,500.6 859.0,489.8 859.2,458.6 859.4,465.5 859.6,446.4 859.8,448.8 860.0,446.1 860.2,440.7 860.4,451.6 860.6,463.2 860.8,432.6 861.0,432.7" fill="none" stroke="#fa8a1a" stroke-width="1.25" stroke-linejoin="round"/>
<polyline points="861.0,432.7 861.2,457.9 861.4,444.9 861.6,473.7 861.8,452.7 862.0,478.4 862.2,496.5 862.4,365.1 862.6,448.6 862.8,461.5 863.0,379.8 863.2,462.7 863.4,401.6 863.6,494.1 863.8,393.2 864.0,500.0 864.2,391.4 864.4,417.8 864.6,459.1 864.8,446.6 865.0,394.8" fill="none" stroke="#fa8a1a" stroke-width="1.25" stroke-linejoin="round"/>
<polyline points="865.0,394.8 865.2,423.5 865.4,383.9 865.6,400.4 865.8,378.8 866.0,500.3 866.2,480.2 866.4,460.7 866.6,424.0 866.8,398.7 867.0,387.1 867.2,436.7 867.4,399.4 867.6,415.2 867.8,410.8 868.0,399.5 868.2,401.1 868.4,495.4 868.6,395.6 868.8,429.6 869.0,428.5" fill="none" stroke="#fa8a1a" stroke-width="1.25" stroke-linejoin="round"/>
<polyline points="869.0,428.5 869.2,400.0 869.4,415.1 869.6,462.3 869.8,368.3 870.0,422.0 870.2,445.0 870.4,446.8 870.6,488.1 870.8,459.7 871.0,447.8 871.2,473.8 871.4,432.9 871.6,440.7 871.8,406.7 872.0,431.9 872.2,503.0 872.4,496.2 872.6,503.0 872.8,441.6 873.0,378.0" fill="none" stroke="#fa8a1a" stroke-width="1.25" stroke-linejoin="round"/>
<polyline points="873.0,378.0 873.2,381.7 873.4,386.5 873.6,390.9 873.8,450.2 874.0,458.9 874.2,464.9 874.4,401.2 874.6,416.8 874.8,490.8 875.0,475.1 875.2,375.5 875.4,444.3 875.6,396.4 875.8,416.4 876.0,422.4 876.2,448.5 876.4,411.8 876.6,386.3 876.8,373.0 877.0,484.5" fill="none" stroke="#fa8a1a" stroke-width="1.25" stroke-linejoin="round"/>
<polyline points="877.0,484.5 877.2,447.0 877.4,441.8 877.6,388.5 877.8,433.1 878.0,425.6 878.2,453.2 878.4,397.2 878.6,440.8 878.8,429.5 879.0,451.2 879.2,415.8 879.4,442.1 879.6,397.8 879.8,492.2 880.0,477.2 880.2,400.2 880.4,426.7 880.6,388.5 880.8,369.4 881.0,368.6" fill="none" stroke="#fa8a1a" stroke-width="1.25" stroke-linejoin="round"/>
<polyline points="881.0,368.6 881.2,471.9 881.4,392.9 881.6,419.1 881.8,446.9 882.0,456.2 882.2,444.6 882.4,462.0 882.6,376.2 882.8,492.4 883.0,372.8 883.2,501.5 883.4,463.4 883.6,451.9 883.8,433.4 884.0,451.5 884.2,494.0 884.4,503.0 884.6,497.8 884.8,396.3 885.0,472.6" fill="none" stroke="#fa8a1a" stroke-width="1.25" stroke-linejoin="round"/>
<polyline points="885.0,472.6 885.2,423.7 885.4,419.0 885.6,409.3 885.8,497.8 886.0,382.8 886.2,477.9 886.4,487.6 886.6,373.8 886.8,416.9 887.0,440.2 887.2,451.7 887.4,398.6 887.6,418.5 887.8,475.6 888.0,395.3 888.2,432.3 888.4,501.0 888.6,439.6 888.8,403.7 889.0,498.3" fill="none" stroke="#fa8a1a" stroke-width="1.25" stroke-linejoin="round"/>
<polyline points="889.0,498.3 889.2,400.9 889.4,449.5 889.6,457.3 889.8,472.6 890.0,478.6 890.2,387.9 890.4,381.5 890.6,502.4 890.8,397.4 891.0,482.3 891.2,406.5 891.4,382.4 891.6,419.2 891.8,407.7 892.0,399.6 892.2,497.6 892.4,402.2 892.6,411.1 892.8,422.9 893.0,468.4" fill="none" stroke="#fa8a1a" stroke-width="1.25" stroke-linejoin="round"/>
<polyline points="893.0,468.4 893.2,468.6 893.4,385.1 893.6,497.2 893.8,491.0 894.0,407.0 894.2,485.0 894.4,378.5 894.6,368.2 894.8,453.8 895.0,414.1 895.2,369.7 895.4,465.8 895.6,482.2 895.8,472.9 896.0,468.1 896.2,384.2 896.4,392.0 896.6,391.6 896.8,417.6 897.0,404.9" fill="none" stroke="#fa8a1a" stroke-width="1.25" stroke-linejoin="round"/>
<polyline points="897.0,404.9 897.2,501.9 897.4,479.9 897.6,487.3 897.8,398.1 898.0,424.8 898.2,492.5 898.4,481.0 898.6,433.3 898.8,381.4 899.0,483.0 899.2,472.7 899.4,471.3 899.6,468.4 899.8,394.4 900.0,492.5 900.2,368.5 900.4,502.1 900.6,432.4 900.8,451.7 901.0,431.9" fill="none" stroke="#fa8a1a" stroke-width="1.25" stroke-linejoin="round"/>
<polyline points="901.0,431.9 901.2,487.3 901.4,464.8 901.6,391.4 901.8,401.1 902.0,496.1 902.2,477.3 902.4,420.3 902.6,427.9 902.8,413.3 903.0,386.7 903.2,472.7 903.4,442.2 903.6,364.3 903.8,420.5 904.0,436.0 904.2,453.6 904.4,459.8 904.6,452.3 904.8,418.5 905.0,496.6" fill="none" stroke="#fa8a1a" stroke-width="1.25" stroke-linejoin="round"/>
<polyline points="905.0,496.6 905.2,477.8 905.4,411.8 905.6,402.2 905.8,441.7 906.0,371.8 906.2,496.9 906.4,404.8 906.6,380.2 906.8,412.0 907.0,404.3 907.2,399.4 907.4,397.0 907.6,410.1 907.8,442.1 908.0,446.6 908.2,422.3 908.4,409.5 908.6,415.6 908.8,365.0 909.0,462.8" fill="none" stroke="#fa8a1a" stroke-width="1.25" stroke-linejoin="round"/>
<polyline points="909.0,462.8 909.2,388.7 909.4,495.7 909.6,380.4 909.8,484.3 910.0,456.5 910.2,450.4 910.4,430.8 910.6,430.6 910.8,499.7 911.0,434.7 911.2,434.5 911.4,457.2 911.6,393.5 911.8,431.4 912.0,411.8 912.2,415.2 912.4,461.1 912.6,420.3 912.8,402.3 913.0,422.9" fill="none" stroke="#fa8a1a" stroke-width="1.25" stroke-linejoin="round"/>
<polyline points="913.0,422.9 913.2,412.4 913.4,391.3 913.6,432.4 913.8,455.9 914.0,436.1 914.2,481.3 914.4,498.4 914.6,385.0 914.8,390.0 915.0,390.4 915.2,383.2 915.4,393.1" fill="none" stroke="#fa8a1a" stroke-width="1.25" stroke-linejoin="round"/>
<defs><clipPath id="uc"><circle cx="347.9" cy="431.6" r="72.5"/></clipPath></defs>
<g fill="none" stroke="#8e8e8e" stroke-width="0.9">
<circle cx="347.9" cy="431.6" r="72.5"/>
<line x1="275.4" y1="431.6" x2="420.4" y2="431.6"/>
<circle cx="359.98" cy="431.60" r="60.42"/>
<circle cx="372.07" cy="431.60" r="48.33"/>
<circle cx="384.15" cy="431.60" r="36.25"/>
<circle cx="396.23" cy="431.60" r="24.17"/>
<circle cx="408.32" cy="431.60" r="12.08"/>
<g clip-path="url(#uc)">
<circle cx="420.40" cy="69.10" r="362.50"/>
<circle cx="420.40" cy="794.10" r="362.50"/>
<circle cx="420.40" cy="286.60" r="145.00"/>
<circle cx="420.40" cy="576.60" r="145.00"/>
<circle cx="420.40" cy="359.10" r="72.50"/>
<circle cx="420.40" cy="504.10" r="72.50"/>
<circle cx="420.40" cy="395.35" r="36.25"/>
<circle cx="420.40" cy="467.85" r="36.25"/>
<circle cx="420.40" cy="417.10" r="14.50"/>
<circle cx="420.40" cy="446.10" r="14.50"/>
</g></g>
<text x="351.8" y="355.7" text-anchor="middle" font-family="Liberation Sans" font-size="9.5" fill="#b4b4b4">1</text>
<text x="297.4" y="371.1" text-anchor="middle" font-family="Liberation Sans" font-size="9.5" fill="#b4b4b4">.5</text>
<text x="273" y="401.5" text-anchor="middle" font-family="Liberation Sans" font-size="9.5" fill="#b4b4b4">.2</text>
<text x="269.2" y="440.5" text-anchor="middle" font-family="Liberation Sans" font-size="9.5" fill="#b4b4b4">0</text>
<text x="293.2" y="440.3" text-anchor="middle" font-family="Liberation Sans" font-size="9.5" fill="#b4b4b4">.2</text>
<text x="317.2" y="440.3" text-anchor="middle" font-family="Liberation Sans" font-size="9.5" fill="#b4b4b4">.5</text>
<text x="342.8" y="440.3" text-anchor="middle" font-family="Liberation Sans" font-size="9.5" fill="#b4b4b4">1</text>
<text x="366.8" y="440.3" text-anchor="middle" font-family="Liberation Sans" font-size="9.5" fill="#b4b4b4">2</text>
<text x="390.8" y="440.3" text-anchor="middle" font-family="Liberation Sans" font-size="9.5" fill="#b4b4b4">5</text>
<text x="395.6" y="371.1" text-anchor="middle" font-family="Liberation Sans" font-size="9.5" fill="#b4b4b4">2</text>
<text x="419" y="400.5" text-anchor="middle" font-family="Liberation Sans" font-size="9.5" fill="#b4b4b4">5</text>
<text x="421.2" y="469.3" text-anchor="middle" font-family="Liberation Sans" font-size="9.5" fill="#b4b4b4">-5</text>
<text x="397.2" y="499.1" text-anchor="middle" font-family="Liberation Sans" font-size="9.5" fill="#b4b4b4">-2</text>
<text x="353" y="514.1" text-anchor="middle" font-family="Liberation Sans" font-size="9.5" fill="#b4b4b4">-1</text>
<text x="296.4" y="499.7" text-anchor="middle" font-family="Liberation Sans" font-size="9.5" fill="#b4b4b4">-.5</text>
<text x="272.4" y="469.3" text-anchor="middle" font-family="Liberation Sans" font-size="9.5" fill="#b4b4b4">-.2</text>
<polyline points="323.0,465.5 322.9,465.6 322.8,465.6 322.6,465.7 322.5,465.8 322.3,465.9 322.1,466.0 321.8,466.2 321.5,466.5 321.1,466.8 320.7,467.2 320.3,467.6 319.8,468.1 319.3,468.6 318.8,469.2 318.4,469.8 318.0,470.5 317.6,471.3 317.2,472.1 316.8,472.9 316.4,473.9 316.1,474.8 315.9,475.9 315.8,476.9 315.9,478.0 316.1,479.2 316.4,480.4 316.8,481.7 317.3,483.1 317.9,484.4 318.6,485.8 319.5,487.0 320.5,488.2 321.7,489.3 323.0,490.4 324.5,491.5 326.1,492.5 327.8,493.4 329.5,494.3 331.4,495.2 333.3,495.9 335.2,496.6 337.2,497.2 339.3,497.9 341.5,498.4 343.7,498.8 346.1,499.1 348.6,499.3 351.2,499.2 354.1,499.0 357.2,498.6 360.5,498.1 363.8,497.4 367.2,496.6 370.6,495.7 373.8,494.6 376.8,493.3 379.6,491.9 382.4,490.3 385.1,488.5 387.6,486.6 390.1,484.5 392.6,482.4 394.9,480.2 397.2,478.0 399.4,475.7 401.6,473.3 403.7,470.8 405.8,468.2 407.7,465.6 409.5,462.9 411.1,460.2 412.6,457.5 413.9,454.8 415.0,452.0 416.1,449.2 416.9,446.4 417.7,443.5 418.2,440.6 418.7,437.5 419.0,434.4 419.2,431.1 419.2,427.7 419.2,424.1 419.0,420.5 418.6,416.9 418.1,413.3 417.3,409.7 416.4,406.3 415.2,402.9 413.8,399.4 412.2,395.9 410.4,392.5 408.4,389.2 406.4,386.1 404.4,383.2 402.4,380.7 400.4,378.5 398.4,376.7 396.4,375.0 394.3,373.6 392.1,372.3 389.7,371.2 387.2,370.2 384.4,369.2 381.3,368.3 377.7,367.5 373.9,366.9 370.0,366.3 366.2,365.9 362.5,365.6 359.1,365.4 356.3,365.4 354.0,365.5 352.0,365.8 350.4,366.2 349.0,366.7 347.7,367.3 346.4,368.0 345.0,368.8 343.5,369.6 341.8,370.5 340.0,371.6 338.2,372.7 336.4,373.9 334.6,375.2 332.9,376.5 331.4,377.9 330.0,379.2 328.8,380.6 327.7,382.0 326.7,383.5 325.8,384.9 325.0,386.4 324.3,387.9 323.7,389.4 323.3,390.8 323.0,392.2 322.9,393.5 323.0,394.9 323.1,396.2 323.3,397.5 323.6,398.8 323.9,400.1 324.2,401.3 324.5,402.6 324.8,403.9 325.2,405.3 325.6,406.7 326.1,407.9 326.6,408.9 327.3,409.6 328.0,410.0 328.9,409.9 329.9,409.5 331.0,408.7 332.2,407.7 333.4,406.6 334.6,405.6 335.8,404.7 337.0,404.0 338.1,403.5 339.3,403.0 340.4,402.5 341.5,402.1 342.7,401.8 343.8,401.6 344.9,401.5 346.0,401.5 347.2,401.7 348.4,402.1 349.7,402.5 351.0,403.1 352.1,403.7 353.2,404.5 354.0,405.2 354.6,406.0 354.9,406.9 355.1,407.9 355.1,409.0 354.9,410.1 354.6,411.2 354.2,412.2 353.6,413.2 353.0,414.0 352.2,414.7 351.1,415.3 349.9,415.8 348.6,416.3 347.3,416.7 345.9,417.0 344.7,417.2 343.5,417.3 342.4,417.2 341.3,416.9 340.2,416.5 339.2,415.9 338.2,415.4 337.3,415.0 336.5,414.7 335.8,414.6 335.3,414.7 334.8,415.0 334.5,415.3 334.2,415.7 334.1,416.3 334.0,416.8 334.0,417.4 334.0,418.0 334.1,418.7 334.4,419.5 334.7,420.3 335.1,421.2 335.6,422.1 336.1,422.9 336.5,423.6 337.0,424.2 337.4,424.6 337.9,425.0 338.4,425.3 338.9,425.4 339.4,425.6 339.9,425.6 340.5,425.5 341.0,425.4 341.6,425.1 342.3,424.7 343.0,424.2 343.7,423.6 344.3,423.0 344.8,422.4 345.2,421.8 345.4,421.2 345.4,420.6 345.2,420.0 344.8,419.4 344.3,418.7 343.8,418.1 343.2,417.6 342.6,417.2 342.0,417.0 341.4,416.9 340.7,417.0 340.0,417.2 339.3,417.5 338.5,417.8 337.7,418.2 336.9,418.6 336.0,419.0 335.1,419.4 334.0,419.7 332.9,420.1 331.8,420.6 330.7,421.0 329.7,421.6 328.8,422.2 328.0,423.0 327.3,423.9 326.7,425.1 326.2,426.3 325.7,427.6 325.3,428.9 325.1,430.1 325.0,431.2 325.0,432.0 325.2,432.6 325.7,432.9 326.2,433.2 326.9,433.3 327.7,433.4 328.5,433.5 329.3,433.7 330.0,434.0 330.8,434.4 331.6,434.9 332.6,435.4 333.5,435.9 334.4,436.4 335.1,437.0 335.7,437.5 336.0,438.0 336.1,438.5 336.0,439.1 335.7,439.6 335.2,440.2 334.7,440.6 334.2,441.1 333.6,441.4 333.0,441.5 332.4,441.5 331.6,441.4 330.8,441.1 330.0,440.8 329.1,440.4 328.3,439.9 327.6,439.5 327.0,439.0 326.5,438.4 326.2,437.6 325.9,436.8 325.7,435.9 325.5,435.1 325.3,434.5 325.0,434.1 324.6,434.0 324.1,434.3 323.6,434.8 323.0,435.6 322.4,436.5 321.8,437.6 321.2,438.7 320.6,439.9 320.0,441.0 319.4,442.2 318.8,443.5 318.2,444.9 317.6,446.3 317.1,447.8 316.6,449.2 316.3,450.6 316.0,452.0 315.9,453.3 315.8,454.7 315.9,456.1 316.0,457.5 316.2,458.8 316.4,460.0 316.7,461.1 317.0,462.0 317.4,462.7 317.8,463.3 318.4,463.7 318.9,464.1 319.5,464.4 320.1,464.6 320.6,464.8 321.0,465.0 321.4,465.2 321.7,465.3 322.0,465.4 322.2,465.4 322.5,465.5 322.7,465.5 322.9,465.5 323.0,465.5" fill="none" stroke="#2f9ad8" stroke-width="1.2" stroke-linejoin="round"/>
<path d="M412.5 433 C413.5 445 413 455 410.5 462" fill="none" stroke="#2f9ad8" stroke-width="1.1"/>
<circle cx="323" cy="465" r="1.3" fill="#2f9ad8"/>
<rect x="163" y="284" width="278" height="2" fill="#7862ae"/>
<rect x="544" y="284" width="278" height="2" fill="#7862ae"/>
<rect x="163" y="520" width="278" height="2" fill="#7862ae"/>
<rect x="544" y="520" width="278" height="2" fill="#7862ae"/>
<path d="M163 124.5 L172.7 119.9 L172.7 128.5 Z" fill="#9a9a9a"/>
<path d="M535 124.5 L525.8 120.1 L525.8 128.5 Z" fill="#9a9a9a"/>
<path d="M544 124.5 L553.7 119.9 L553.7 128.5 Z" fill="#9a9a9a"/>
<path d="M916 124.5 L906.8 120.1 L906.8 128.5 Z" fill="#9a9a9a"/>
<path d="M511 91.6V88H514.6 M516.8 88H520.4V91.6 M520.4 93.80000000000001V97.4H516.8 M514.6 97.4H511V93.80000000000001" fill="none" stroke="#f2f2f2" stroke-width="1.9"/>
<path d="M892.1 92.1V88.5H895.7 M897.9 88.5H901.5V92.1 M901.5 94.30000000000001V97.9H897.9 M895.7 97.9H892.1V94.30000000000001" fill="none" stroke="#f2f2f2" stroke-width="1.9"/>
<path d="M511 327.6V324H514.6 M516.8 324H520.4V327.6 M520.4 329.79999999999995V333.4H516.8 M514.6 333.4H511V329.79999999999995" fill="none" stroke="#f2f2f2" stroke-width="1.9"/>
<path d="M892.1 327.6V324H895.7 M897.9 324H901.5V327.6 M901.5 329.79999999999995V333.4H897.9 M895.7 333.4H892.1V329.79999999999995" fill="none" stroke="#f2f2f2" stroke-width="1.9"/>
<rect x="540" y="315.5" width="379" height="233" fill="none" stroke="#e01818" stroke-width="3"/></svg>
<div class="t" style="left:169.2px;top:295px;font-size:10.3px;line-height:12.36px;color:#e6e6e6;font-weight:normal;letter-spacing:-0.227px;transform:scaleX(0.9680);transform-origin:left;">2&#8201;GHz</div>
<div class="t" style="left:197.67px;width:300px;text-align:center;top:295px;font-size:10.3px;line-height:12.36px;color:#e6e6e6;font-weight:normal;letter-spacing:-0.277px;transform:scaleX(0.9533);transform-origin:center;">SWEEP: 1.5 s</div>
<div class="t" style="right:472.23px;top:295px;font-size:10.3px;line-height:12.36px;color:#e6e6e6;font-weight:normal;letter-spacing:-0.240px;transform:scaleX(0.9661);transform-origin:right;">3&#8201;GHz</div>
<div class="t" style="left:550.2px;top:295px;font-size:10.3px;line-height:12.36px;color:#e6e6e6;font-weight:normal;letter-spacing:-0.227px;transform:scaleX(0.9680);transform-origin:left;">2&#8201;GHz</div>
<div class="t" style="left:578.67px;width:300px;text-align:center;top:295px;font-size:10.3px;line-height:12.36px;color:#e6e6e6;font-weight:normal;letter-spacing:-0.277px;transform:scaleX(0.9533);transform-origin:center;">SWEEP: 1.5 s</div>
<div class="t" style="right:91.23px;top:295px;font-size:10.3px;line-height:12.36px;color:#e6e6e6;font-weight:normal;letter-spacing:-0.240px;transform:scaleX(0.9661);transform-origin:right;">3&#8201;GHz</div>
<div class="t" style="left:169.2px;top:532px;font-size:10.3px;line-height:12.36px;color:#e6e6e6;font-weight:normal;letter-spacing:-0.227px;transform:scaleX(0.9680);transform-origin:left;">2&#8201;GHz</div>
<div class="t" style="left:197.67px;width:300px;text-align:center;top:532px;font-size:10.3px;line-height:12.36px;color:#e6e6e6;font-weight:normal;letter-spacing:-0.277px;transform:scaleX(0.9533);transform-origin:center;">SWEEP: 1.5 s</div>
<div class="t" style="right:472.23px;top:532px;font-size:10.3px;line-height:12.36px;color:#e6e6e6;font-weight:normal;letter-spacing:-0.240px;transform:scaleX(0.9661);transform-origin:right;">3&#8201;GHz</div>
<div class="t" style="left:550.2px;top:532px;font-size:10.3px;line-height:12.36px;color:#e6e6e6;font-weight:normal;letter-spacing:-0.227px;transform:scaleX(0.9680);transform-origin:left;">2&#8201;GHz</div>
<div class="t" style="left:578.67px;width:300px;text-align:center;top:532px;font-size:10.3px;line-height:12.36px;color:#e6e6e6;font-weight:normal;letter-spacing:-0.277px;transform:scaleX(0.9533);transform-origin:center;">SWEEP: 1.5 s</div>
<div class="t" style="right:91.23px;top:532px;font-size:10.3px;line-height:12.36px;color:#e6e6e6;font-weight:normal;letter-spacing:-0.240px;transform:scaleX(0.9661);transform-origin:right;">3&#8201;GHz</div>
<div class="t" style="left:164.5px;top:564px;font-size:10.2px;line-height:12.24px;color:#e6e6e6;font-weight:normal;letter-spacing:-0.148px;transform:scaleX(0.9767);transform-origin:left;">POINTS 2000</div>
<div class="t" style="right:86.38px;top:564px;font-size:10.4px;line-height:12.48px;color:#e6e6e6;font-weight:normal;letter-spacing:-0.182px;transform:scaleX(0.9704);transform-origin:right;">IF BANDWIDTH 1 kHz</div>
<div class="t" style="left:810.79px;width:300px;text-align:center;top:57px;font-size:11px;line-height:13.20px;color:#ececec;font-weight:normal;letter-spacing:-0.440px;transform:scaleX(0.9490);transform-origin:center;">FREQUENCY</div>
<div class="t" style="left:810.78px;width:300px;text-align:center;top:103px;font-size:11px;line-height:13.20px;color:#ececec;font-weight:normal;letter-spacing:-0.463px;transform:scaleX(0.9487);transform-origin:center;">SCALE</div>
<div class="t" style="left:810.75px;width:300px;text-align:center;top:148px;font-size:11px;line-height:13.20px;color:#ececec;font-weight:normal;letter-spacing:-0.533px;transform:scaleX(0.9487);transform-origin:center;">POWER</div>
<div class="t" style="left:810.78px;width:300px;text-align:center;top:194px;font-size:11px;line-height:13.20px;color:#ececec;font-weight:normal;letter-spacing:-0.465px;transform:scaleX(0.9487);transform-origin:center;">MEASURE</div>
<div class="t" style="left:810.76px;width:300px;text-align:center;top:240px;font-size:11px;line-height:13.20px;color:#ececec;font-weight:normal;letter-spacing:-0.510px;transform:scaleX(0.9487);transform-origin:center;">SWEEP</div>
<div class="t" style="left:810.77px;width:300px;text-align:center;top:285px;font-size:11px;line-height:13.20px;color:#ececec;font-weight:normal;letter-spacing:-0.483px;transform:scaleX(0.9487);transform-origin:center;">MARKER</div>
<div class="t" style="left:810.83px;width:300px;text-align:center;top:331px;font-size:11px;line-height:13.20px;color:#ececec;font-weight:normal;letter-spacing:-0.361px;transform:scaleX(0.9487);transform-origin:center;">LIMIT</div>
<div class="t" style="left:810.84px;width:300px;text-align:center;top:377px;font-size:11px;line-height:13.20px;color:#ececec;font-weight:normal;letter-spacing:-0.327px;transform:scaleX(0.9567);transform-origin:center;">CALIBRATE</div>
<div class="t" style="left:810.65px;width:300px;text-align:center;top:422px;font-size:11px;line-height:13.20px;color:#ececec;font-weight:normal;letter-spacing:-0.753px;transform:scaleX(0.9192);transform-origin:center;">TRACE</div>
<div class="t" style="left:810.78px;width:300px;text-align:center;top:468px;font-size:11px;line-height:13.20px;color:#ececec;font-weight:normal;letter-spacing:-0.471px;transform:scaleX(0.9487);transform-origin:center;">SETUP</div>
<div class="t" style="left:810.79px;width:300px;text-align:center;top:514px;font-size:11px;line-height:13.20px;color:#ececec;font-weight:normal;letter-spacing:-0.452px;transform:scaleX(0.9487);transform-origin:center;">PRESET</div>
<div class="t" style="left:810.81px;width:300px;text-align:center;top:559px;font-size:11px;line-height:13.20px;color:#ececec;font-weight:normal;letter-spacing:-0.397px;transform:scaleX(0.9487);transform-origin:center;">FILE</div>
<svg width="1000" height="625"><path d="M57.4 598.3V613.7M49.5 606H65.3" stroke="#fff" stroke-width="2.5"/></svg>
<div class="t" style="left:72.8px;top:599px;font-size:12.9px;line-height:15.48px;color:#e8f6f2;font-weight:normal;letter-spacing:-0.542px;transform:scaleX(0.9468);transform-origin:left;">SHORTCUT</div>
</body></html>
